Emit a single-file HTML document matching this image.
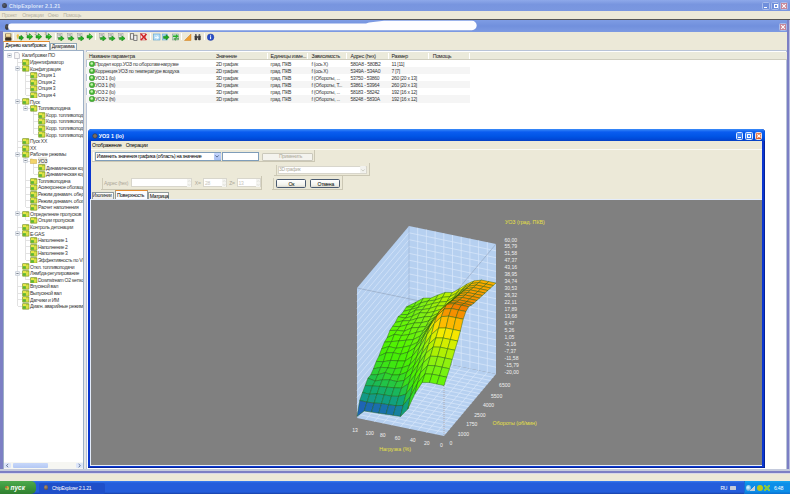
<!DOCTYPE html><html><head><meta charset="utf-8"><style>
html,body{margin:0;padding:0;width:790px;height:494px;overflow:hidden;background:#ECE9D8;position:relative;font-family:'Liberation Sans',sans-serif;}
.t{position:absolute;line-height:8px;white-space:nowrap;}
div{box-sizing:border-box;}
</style></head><body>
<div style="position:absolute;left:0px;top:0px;width:790px;height:11px;background:linear-gradient(#8EA9EA,#7895DF 40%,#7A97E0);"></div>
<div style="position:absolute;left:2.4px;top:2.8px;width:4.8px;height:5.4px;background:radial-gradient(circle at 40% 40%,#5A6070,#22262E);border-radius:50%;"></div>
<div class="t" style="left:9px;top:1.5px;font-size:5.25px;color:#DCE6FA;font-weight:bold;letter-spacing:0.12px;">ChipExplorer 2.1.21</div>
<div style="position:absolute;left:762px;top:2px;width:8px;height:8px;background:#6F8FDC;border:0.5px solid #A8BCEC;border-radius:1.5px;"></div>
<div style="position:absolute;left:771px;top:2px;width:8px;height:8px;background:#6F8FDC;border:0.5px solid #A8BCEC;border-radius:1.5px;"></div>
<div style="position:absolute;left:780px;top:2px;width:8px;height:8px;background:#C68496;border:0.5px solid #A8BCEC;border-radius:1.5px;"></div>
<div style="position:absolute;left:764px;top:6.5px;width:3px;height:1.2px;background:#fff"></div>
<div style="position:absolute;left:773.5px;top:3.8px;width:4px;height:4px;border:0.8px solid #fff;border-top-width:1.5px"></div>
<svg style="position:absolute;left:780px;top:2px" width="8" height="8"><path d="M2.2 2.2L5.8 5.8M5.8 2.2L2.2 5.8" stroke="#fff" stroke-width="1.1"/></svg>
<div style="position:absolute;left:0px;top:11px;width:790px;height:8px;background:#ECE9D8;"></div>
<div class="t" style="left:1.8px;top:10.9px;font-size:5.06px;letter-spacing:-0.285px;color:#B4B0A0;">Проект</div>
<div class="t" style="left:22.2px;top:10.9px;font-size:5.06px;letter-spacing:-0.285px;color:#B4B0A0;">Операции</div>
<div class="t" style="left:47.8px;top:10.9px;font-size:5.06px;letter-spacing:-0.285px;color:#B4B0A0;">Окно</div>
<div class="t" style="left:63.2px;top:10.9px;font-size:5.06px;letter-spacing:-0.285px;color:#B4B0A0;">Помощь</div>
<div style="position:absolute;left:0px;top:18.6px;width:790px;height:1px;background:#555;"></div>
<div style="position:absolute;left:0px;top:19.5px;width:790px;height:12px;background:linear-gradient(#7E9CE4,#7190DD 50%,#7D9AE2);"></div>
<div style="position:absolute;left:5px;top:23.6px;width:4.4px;height:6px;background:radial-gradient(circle at 40% 40%,#555,#222);border-radius:50%;"></div>
<svg style="position:absolute;left:0;top:17px" width="490" height="16" viewBox="0 0 490 16"><path d="M11.5 6.4H366L369 5.6L384 3.8H472A4.6 4.6 0 0 1 472 13.2H11.5A3.4 3.4 0 0 1 11.5 6.4Z" fill="#FDFDFF"/></svg>
<div style="position:absolute;left:778.5px;top:22.5px;width:8px;height:8px;background:#C68496;border:0.5px solid #A8BCEC;border-radius:1.5px;"></div>
<svg style="position:absolute;left:778.5px;top:22.5px" width="8" height="8"><path d="M2.2 2.2L5.8 5.8M5.8 2.2L2.2 5.8" stroke="#fff" stroke-width="1.1"/></svg>
<div style="position:absolute;left:0px;top:31px;width:2.5px;height:442px;background:#7C7FC4;"></div>
<div style="position:absolute;left:785px;top:50.3px;width:3.5px;height:421px;background:#C4CADC;"></div>
<div style="position:absolute;left:787.4px;top:19.5px;width:2.6px;height:453px;background:#7C7FC4;border-right:0.8px solid #B8BCE0;"></div>
<div style="position:absolute;left:2.5px;top:31.5px;width:784.5px;height:9px;background:#ECE9D8;"></div>
<div style="position:absolute;left:2.5px;top:40.5px;width:47.5px;height:10px;background:#FCFCFE;border:0.5px solid #91A7B4;border-bottom:none;border-top:1.5px solid #E68B2C;"></div>
<div class="t" style="left:5.3px;top:41.1px;font-size:5.06px;letter-spacing:-0.285px;color:#000;">Дерево калибровок</div>
<div style="position:absolute;left:50px;top:43px;width:26.5px;height:7px;background:linear-gradient(#FFFFFF,#ECEBE6);border:0.5px solid #91A7B4;border-bottom:none;"></div>
<div class="t" style="left:51.8px;top:42.6px;font-size:4.84px;letter-spacing:-0.273px;color:#222;">Диаграмма</div>
<div style="position:absolute;left:2.5px;top:50.3px;width:81px;height:420px;background:#fff;border:0.6px solid #9DB0C6;"></div>
<div style="position:absolute;left:83.5px;top:50.3px;width:2.5px;height:420px;background:#E6E6E6;"></div>
<div style="position:absolute;left:85.5px;top:50.3px;width:701.5px;height:420px;background:#fff;border:0.6px solid #B9C4D8;"></div>
<svg style="position:absolute;left:4.5px;top:32.5px" width="7" height="8" viewBox="0 0 7 8"><rect x="0.3" y="0.5" width="6" height="7" fill="#6A5838"/><rect x="1" y="0.8" width="4.6" height="3" fill="#F2D898"/><rect x="0.3" y="5" width="6" height="2.5" fill="#3A3020"/></svg>
<div style="position:absolute;left:13px;top:32.5px;width:0.8px;height:7.5px;background:#C8C4B0;border-right:0.5px solid #fff;"></div>
<div style="position:absolute;left:55px;top:32.5px;width:0.8px;height:7.5px;background:#C8C4B0;border-right:0.5px solid #fff;"></div>
<div style="position:absolute;left:95px;top:32.5px;width:0.8px;height:7.5px;background:#C8C4B0;border-right:0.5px solid #fff;"></div>
<div style="position:absolute;left:128px;top:32.5px;width:0.8px;height:7.5px;background:#C8C4B0;border-right:0.5px solid #fff;"></div>
<div style="position:absolute;left:150px;top:32.5px;width:0.8px;height:7.5px;background:#C8C4B0;border-right:0.5px solid #fff;"></div>
<div style="position:absolute;left:181px;top:32.5px;width:0.8px;height:7.5px;background:#C8C4B0;border-right:0.5px solid #fff;"></div>
<div style="position:absolute;left:204px;top:32.5px;width:0.8px;height:7.5px;background:#C8C4B0;border-right:0.5px solid #fff;"></div>
<svg style="position:absolute;left:16px;top:32.5px" width="8" height="8" viewBox="0 0 8 8"><path d="M0.5 2.5L2 0.8L3 2.5L1.5 6.5Z" fill="#F0C040"/><path d="M3 3.6L5 3.6L5 2.2L7.6 4.8L5 7.4L5 6L3 6Z" fill="#1FA81F" stroke="#0E6E0E" stroke-width="0.5"/></svg>
<div class="t" style="left:25.5px;top:30.3px;font-size:4.2px;color:#666">1</div>
<svg style="position:absolute;left:26px;top:33.0px" width="7" height="7" viewBox="0 0 7 7"><path d="M1 2.4H3.3V0.6L6.8 3.7L3.3 6.8V5H1Z" fill="#22B022" stroke="#137013" stroke-width="0.45" stroke-linejoin="round"/><path d="M1.6 3H3.8V1.8L5.2 3Z" fill="#9AF08A"/></svg>
<div class="t" style="left:34.5px;top:30.3px;font-size:4.2px;color:#666">2</div>
<svg style="position:absolute;left:35px;top:33.0px" width="7" height="7" viewBox="0 0 7 7"><path d="M1 2.4H3.3V0.6L6.8 3.7L3.3 6.8V5H1Z" fill="#22B022" stroke="#137013" stroke-width="0.45" stroke-linejoin="round"/><path d="M1.6 3H3.8V1.8L5.2 3Z" fill="#9AF08A"/></svg>
<div class="t" style="left:44.5px;top:30.3px;font-size:4.2px;color:#666">3</div>
<svg style="position:absolute;left:45px;top:33.0px" width="7" height="7" viewBox="0 0 7 7"><path d="M1 2.4H3.3V0.6L6.8 3.7L3.3 6.8V5H1Z" fill="#22B022" stroke="#137013" stroke-width="0.45" stroke-linejoin="round"/><path d="M1.6 3H3.8V1.8L5.2 3Z" fill="#9AF08A"/></svg>
<svg style="position:absolute;left:57px;top:32.5px" width="7.5" height="8" viewBox="0 0 7.5 8"><rect x="0.6" y="0.4" width="4.4" height="4.6" fill="#F2F2EE" stroke="#8A8A8A" stroke-width="0.45"/><path d="M1.3 1.6H4.2M1.3 2.7H3.6" stroke="#666" stroke-width="0.45"/><path d="M1.4 4.4H3.8V2.8L7.2 5.5L3.8 8V6.6H1.4Z" fill="#22B022" stroke="#137013" stroke-width="0.4" stroke-linejoin="round"/></svg>
<svg style="position:absolute;left:67px;top:32.5px" width="7.5" height="8" viewBox="0 0 7.5 8"><rect x="0.6" y="0.4" width="4.4" height="4.6" fill="#F2F2EE" stroke="#8A8A8A" stroke-width="0.45"/><path d="M1.3 1.6H4.2M1.3 2.7H3.6" stroke="#666" stroke-width="0.45"/><path d="M1.4 4.4H3.8V2.8L7.2 5.5L3.8 8V6.6H1.4Z" fill="#22B022" stroke="#137013" stroke-width="0.4" stroke-linejoin="round"/></svg>
<svg style="position:absolute;left:76.5px;top:32.5px" width="7.5" height="8" viewBox="0 0 7.5 8"><rect x="0.6" y="0.4" width="4.4" height="4.6" fill="#F2F2EE" stroke="#8A8A8A" stroke-width="0.45"/><path d="M1.3 1.6H4.2M1.3 2.7H3.6" stroke="#666" stroke-width="0.45"/><path d="M1.4 4.4H3.8V2.8L7.2 5.5L3.8 8V6.6H1.4Z" fill="#22B022" stroke="#137013" stroke-width="0.4" stroke-linejoin="round"/></svg>
<svg style="position:absolute;left:99px;top:32.5px" width="7.5" height="8" viewBox="0 0 7.5 8"><rect x="0.6" y="0.4" width="4.4" height="4.6" fill="#F2F2EE" stroke="#8A8A8A" stroke-width="0.45"/><path d="M1.3 1.6H4.2M1.3 2.7H3.6" stroke="#666" stroke-width="0.45"/><path d="M1.4 4.4H3.8V2.8L7.2 5.5L3.8 8V6.6H1.4Z" fill="#22B022" stroke="#137013" stroke-width="0.4" stroke-linejoin="round"/></svg>
<svg style="position:absolute;left:108px;top:32.5px" width="7.5" height="8" viewBox="0 0 7.5 8"><rect x="0.6" y="0.4" width="4.4" height="4.6" fill="#F2F2EE" stroke="#8A8A8A" stroke-width="0.45"/><path d="M1.3 1.6H4.2M1.3 2.7H3.6" stroke="#666" stroke-width="0.45"/><path d="M1.4 4.4H3.8V2.8L7.2 5.5L3.8 8V6.6H1.4Z" fill="#22B022" stroke="#137013" stroke-width="0.4" stroke-linejoin="round"/></svg>
<svg style="position:absolute;left:117.5px;top:32.5px" width="7.5" height="8" viewBox="0 0 7.5 8"><rect x="0.6" y="0.4" width="4.4" height="4.6" fill="#F2F2EE" stroke="#8A8A8A" stroke-width="0.45"/><path d="M1.3 1.6H4.2M1.3 2.7H3.6" stroke="#666" stroke-width="0.45"/><path d="M1.4 4.4H3.8V2.8L7.2 5.5L3.8 8V6.6H1.4Z" fill="#22B022" stroke="#137013" stroke-width="0.4" stroke-linejoin="round"/></svg>
<svg style="position:absolute;left:86px;top:33.0px" width="7" height="7" viewBox="0 0 7 7"><path d="M1 2.4H3.3V0.6L6.8 3.7L3.3 6.8V5H1Z" fill="#22B022" stroke="#137013" stroke-width="0.45" stroke-linejoin="round"/><path d="M1.6 3H3.8V1.8L5.2 3Z" fill="#9AF08A"/></svg>
<svg style="position:absolute;left:130px;top:32.5px" width="8" height="8" viewBox="0 0 8 8"><rect x="0.5" y="0.7" width="3.2" height="5.5" fill="#EEE" stroke="#555" stroke-width="0.7"/><rect x="3.8" y="2.2" width="3.2" height="5.3" fill="#EEE" stroke="#555" stroke-width="0.7"/></svg>
<svg style="position:absolute;left:139.5px;top:32.5px" width="8" height="8" viewBox="0 0 8 8"><rect x="0.5" y="0.5" width="5" height="6.5" fill="#F0E0E0" stroke="#C04040" stroke-width="0.5"/><path d="M1 1L6.5 7M6.5 1L1 7" stroke="#D02020" stroke-width="1.5"/></svg>
<svg style="position:absolute;left:152.5px;top:32.5px" width="8" height="8" viewBox="0 0 8 8"><rect x="0.5" y="1" width="6.5" height="6" fill="#B8E0F8" stroke="#5AA0D0" stroke-width="0.6"/><path d="M2 4.5L5 4.5M3.5 2.8L5.5 4.5L3.5 6" stroke="#fff" stroke-width="0.8" fill="none"/></svg>
<svg style="position:absolute;left:162px;top:32.5px" width="8" height="8" viewBox="0 0 8 8"><rect x="0.5" y="1" width="5" height="6" fill="#A8D8F0" stroke="#5AA0D0" stroke-width="0.5"/><path d="M1.5 3.2L4 3.2L4 1.6L7.2 4.3L4 7L4 5.4L1.5 5.4Z" fill="#1FA81F" stroke="#0E6E0E" stroke-width="0.4"/></svg>
<svg style="position:absolute;left:171.5px;top:32.5px" width="8" height="8" viewBox="0 0 8 8"><rect x="0.5" y="1" width="6" height="6" fill="#C8E0D0" stroke="#7A9A8A" stroke-width="0.5"/><path d="M1 2.5L4 2.5L4 1.2L6.8 3.2L4 5.2L4 4L1 4Z" fill="#28B028"/><path d="M7 5.2L4 5.2L4 4.2L1.2 6L4 7.8L4 6.6L7 6.6Z" fill="#50A050"/></svg>
<svg style="position:absolute;left:184px;top:32.5px" width="8" height="8" viewBox="0 0 8 8"><path d="M0.5 7.5L7 1L7 7.5Z" fill="#F0A030" stroke="#C07010" stroke-width="0.4"/></svg>
<svg style="position:absolute;left:193.5px;top:32.5px" width="8" height="8" viewBox="0 0 8 8"><rect x="0.6" y="2.5" width="2.6" height="4.8" rx="0.8" fill="#3A3A3A"/><rect x="4.1" y="2.5" width="2.6" height="4.8" rx="0.8" fill="#3A3A3A"/><rect x="2.6" y="3.2" width="2" height="1.8" fill="#555"/><rect x="1" y="1" width="1.6" height="2" fill="#666"/><rect x="4.6" y="1" width="1.6" height="2" fill="#666"/></svg>
<svg style="position:absolute;left:206.5px;top:32.5px" width="8" height="8" viewBox="0 0 8 8"><circle cx="3.6" cy="4.2" r="3.3" fill="#2A50C8" stroke="#1A3090" stroke-width="0.4"/><rect x="3.1" y="3.3" width="1" height="2.8" fill="#fff"/><circle cx="3.6" cy="2.3" r="0.55" fill="#fff"/></svg>
<div style="position:absolute;left:3px;top:51px;width:80px;height:411px;overflow:hidden">
<div style="position:absolute;left:14.2px;top:6.700000000000003px;width:0.7px;height:248.3px;background:#E2E2E2"></div>
<div style="position:absolute;left:22.2px;top:19.900000000000002px;width:0.7px;height:23.899999999999995px;background:#E2E2E2"></div>
<div style="position:absolute;left:22.2px;top:52.9px;width:0.7px;height:4.100000000000001px;background:#E2E2E2"></div>
<div style="position:absolute;left:30.2px;top:59.5px;width:0.7px;height:23.89999999999999px;background:#E2E2E2"></div>
<div style="position:absolute;left:22.2px;top:105.7px;width:0.7px;height:50.3px;background:#E2E2E2"></div>
<div style="position:absolute;left:30.2px;top:112.3px;width:0.7px;height:10.700000000000003px;background:#E2E2E2"></div>
<div style="position:absolute;left:22.2px;top:165.09999999999997px;width:0.7px;height:4.100000000000023px;background:#E2E2E2"></div>
<div style="position:absolute;left:22.2px;top:184.89999999999998px;width:0.7px;height:23.900000000000034px;background:#E2E2E2"></div>
<div style="position:absolute;left:22.2px;top:224.5px;width:0.7px;height:4.099999999999966px;background:#E2E2E2"></div>
<div style="position:absolute;left:14.5px;top:10.500000000000002px;width:4.0px;height:0.7px;background:#E2E2E2"></div>
<div style="position:absolute;left:14.5px;top:17.1px;width:4.0px;height:0.7px;background:#E2E2E2"></div>
<div style="position:absolute;left:22.5px;top:23.7px;width:4.0px;height:0.7px;background:#E2E2E2"></div>
<div style="position:absolute;left:22.5px;top:30.3px;width:4.0px;height:0.7px;background:#E2E2E2"></div>
<div style="position:absolute;left:22.5px;top:36.900000000000006px;width:4.0px;height:0.7px;background:#E2E2E2"></div>
<div style="position:absolute;left:22.5px;top:43.5px;width:4.0px;height:0.7px;background:#E2E2E2"></div>
<div style="position:absolute;left:14.5px;top:50.1px;width:4.0px;height:0.7px;background:#E2E2E2"></div>
<div style="position:absolute;left:22.5px;top:56.7px;width:4.0px;height:0.7px;background:#E2E2E2"></div>
<div style="position:absolute;left:30.5px;top:63.300000000000004px;width:4.0px;height:0.7px;background:#E2E2E2"></div>
<div style="position:absolute;left:30.5px;top:69.9px;width:4.0px;height:0.7px;background:#E2E2E2"></div>
<div style="position:absolute;left:30.5px;top:76.5px;width:4.0px;height:0.7px;background:#E2E2E2"></div>
<div style="position:absolute;left:30.5px;top:83.1px;width:4.0px;height:0.7px;background:#E2E2E2"></div>
<div style="position:absolute;left:14.5px;top:89.7px;width:4.0px;height:0.7px;background:#E2E2E2"></div>
<div style="position:absolute;left:14.5px;top:96.3px;width:4.0px;height:0.7px;background:#E2E2E2"></div>
<div style="position:absolute;left:14.5px;top:102.9px;width:4.0px;height:0.7px;background:#E2E2E2"></div>
<div style="position:absolute;left:22.5px;top:109.5px;width:4.0px;height:0.7px;background:#E2E2E2"></div>
<div style="position:absolute;left:30.5px;top:116.1px;width:4.0px;height:0.7px;background:#E2E2E2"></div>
<div style="position:absolute;left:30.5px;top:122.7px;width:4.0px;height:0.7px;background:#E2E2E2"></div>
<div style="position:absolute;left:22.5px;top:129.29999999999998px;width:4.0px;height:0.7px;background:#E2E2E2"></div>
<div style="position:absolute;left:22.5px;top:135.89999999999998px;width:4.0px;height:0.7px;background:#E2E2E2"></div>
<div style="position:absolute;left:22.5px;top:142.5px;width:4.0px;height:0.7px;background:#E2E2E2"></div>
<div style="position:absolute;left:22.5px;top:149.09999999999997px;width:4.0px;height:0.7px;background:#E2E2E2"></div>
<div style="position:absolute;left:22.5px;top:155.7px;width:4.0px;height:0.7px;background:#E2E2E2"></div>
<div style="position:absolute;left:14.5px;top:162.29999999999995px;width:4.0px;height:0.7px;background:#E2E2E2"></div>
<div style="position:absolute;left:22.5px;top:168.89999999999998px;width:4.0px;height:0.7px;background:#E2E2E2"></div>
<div style="position:absolute;left:14.5px;top:175.5px;width:4.0px;height:0.7px;background:#E2E2E2"></div>
<div style="position:absolute;left:14.5px;top:182.09999999999997px;width:4.0px;height:0.7px;background:#E2E2E2"></div>
<div style="position:absolute;left:22.5px;top:188.7px;width:4.0px;height:0.7px;background:#E2E2E2"></div>
<div style="position:absolute;left:22.5px;top:195.29999999999995px;width:4.0px;height:0.7px;background:#E2E2E2"></div>
<div style="position:absolute;left:22.5px;top:201.89999999999998px;width:4.0px;height:0.7px;background:#E2E2E2"></div>
<div style="position:absolute;left:22.5px;top:208.5px;width:4.0px;height:0.7px;background:#E2E2E2"></div>
<div style="position:absolute;left:14.5px;top:215.09999999999997px;width:4.0px;height:0.7px;background:#E2E2E2"></div>
<div style="position:absolute;left:14.5px;top:221.7px;width:4.0px;height:0.7px;background:#E2E2E2"></div>
<div style="position:absolute;left:22.5px;top:228.29999999999995px;width:4.0px;height:0.7px;background:#E2E2E2"></div>
<div style="position:absolute;left:14.5px;top:234.89999999999998px;width:4.0px;height:0.7px;background:#E2E2E2"></div>
<div style="position:absolute;left:14.5px;top:241.5px;width:4.0px;height:0.7px;background:#E2E2E2"></div>
<div style="position:absolute;left:14.5px;top:248.09999999999997px;width:4.0px;height:0.7px;background:#E2E2E2"></div>
<div style="position:absolute;left:14.5px;top:254.7px;width:4.0px;height:0.7px;background:#E2E2E2"></div>
<svg style="position:absolute;left:4.2px;top:1.7000000000000028px" width="5" height="5" viewBox="0 0 5 5"><rect x="0.4" y="0.4" width="4.2" height="4.2" rx="0.8" fill="#EEF0F4" stroke="#A8B4C4" stroke-width="0.5"/><path d="M1.4 2.5H3.6" stroke="#304050" stroke-width="0.6"/></svg>
<svg style="position:absolute;left:11px;top:0.7000000000000028px" width="6" height="7" viewBox="0 0 6 7"><path d="M0.6 0.5H4L5.4 1.8V6.5H0.6Z" fill="#F8F8F8" stroke="#9A9AA8" stroke-width="0.5"/></svg>
<div class="t" style="left:19px;top:0.400000000000003px;font-size:5.06px;letter-spacing:-0.285px;color:#383838;">Калибровки ПО</div>
<svg style="position:absolute;left:19px;top:7.8000000000000025px" width="7.5" height="6.5" viewBox="0 0 7.5 6.5"><rect x="0.4" y="0.5" width="6.6" height="5.8" rx="0.6" fill="#A8C030" stroke="#6A8420" stroke-width="0.45"/><rect x="1" y="1.1" width="3" height="2.1" fill="#E8E848"/><rect x="1" y="3.3" width="2.8" height="2.3" fill="#58B838"/><rect x="4.1" y="1.8" width="2.4" height="3.8" fill="#DCE048"/></svg>
<div class="t" style="left:27px;top:7.0000000000000036px;font-size:5.06px;letter-spacing:-0.285px;color:#383838;">Идентификатор</div>
<svg style="position:absolute;left:12.2px;top:14.900000000000002px" width="5" height="5" viewBox="0 0 5 5"><rect x="0.4" y="0.4" width="4.2" height="4.2" rx="0.8" fill="#EEF0F4" stroke="#A8B4C4" stroke-width="0.5"/><path d="M1.4 2.5H3.6" stroke="#304050" stroke-width="0.6"/></svg>
<svg style="position:absolute;left:19px;top:14.400000000000002px" width="7.5" height="6.5" viewBox="0 0 7.5 6.5"><rect x="0.4" y="0.5" width="6.6" height="5.8" rx="0.6" fill="#A8C030" stroke="#6A8420" stroke-width="0.45"/><rect x="1" y="1.1" width="3" height="2.1" fill="#E8E848"/><rect x="1" y="3.3" width="2.8" height="2.3" fill="#58B838"/><rect x="4.1" y="1.8" width="2.4" height="3.8" fill="#DCE048"/></svg>
<div class="t" style="left:27px;top:13.600000000000003px;font-size:5.06px;letter-spacing:-0.285px;color:#383838;">Конфигурация</div>
<svg style="position:absolute;left:27px;top:21.0px" width="7.5" height="6.5" viewBox="0 0 7.5 6.5"><rect x="0.4" y="0.5" width="6.6" height="5.8" rx="0.6" fill="#A8C030" stroke="#6A8420" stroke-width="0.45"/><rect x="1" y="1.1" width="3" height="2.1" fill="#E8E848"/><rect x="1" y="3.3" width="2.8" height="2.3" fill="#58B838"/><rect x="4.1" y="1.8" width="2.4" height="3.8" fill="#DCE048"/></svg>
<div class="t" style="left:35px;top:20.200000000000003px;font-size:5.06px;letter-spacing:-0.285px;color:#383838;">Опция 1</div>
<svg style="position:absolute;left:27px;top:27.6px" width="7.5" height="6.5" viewBox="0 0 7.5 6.5"><rect x="0.4" y="0.5" width="6.6" height="5.8" rx="0.6" fill="#A8C030" stroke="#6A8420" stroke-width="0.45"/><rect x="1" y="1.1" width="3" height="2.1" fill="#E8E848"/><rect x="1" y="3.3" width="2.8" height="2.3" fill="#58B838"/><rect x="4.1" y="1.8" width="2.4" height="3.8" fill="#DCE048"/></svg>
<div class="t" style="left:35px;top:26.800000000000004px;font-size:5.06px;letter-spacing:-0.285px;color:#383838;">Опция 2</div>
<svg style="position:absolute;left:27px;top:34.2px" width="7.5" height="6.5" viewBox="0 0 7.5 6.5"><rect x="0.4" y="0.5" width="6.6" height="5.8" rx="0.6" fill="#A8C030" stroke="#6A8420" stroke-width="0.45"/><rect x="1" y="1.1" width="3" height="2.1" fill="#E8E848"/><rect x="1" y="3.3" width="2.8" height="2.3" fill="#58B838"/><rect x="4.1" y="1.8" width="2.4" height="3.8" fill="#DCE048"/></svg>
<div class="t" style="left:35px;top:33.4px;font-size:5.06px;letter-spacing:-0.285px;color:#383838;">Опция 3</div>
<svg style="position:absolute;left:27px;top:40.8px" width="7.5" height="6.5" viewBox="0 0 7.5 6.5"><rect x="0.4" y="0.5" width="6.6" height="5.8" rx="0.6" fill="#A8C030" stroke="#6A8420" stroke-width="0.45"/><rect x="1" y="1.1" width="3" height="2.1" fill="#E8E848"/><rect x="1" y="3.3" width="2.8" height="2.3" fill="#58B838"/><rect x="4.1" y="1.8" width="2.4" height="3.8" fill="#DCE048"/></svg>
<div class="t" style="left:35px;top:39.99999999999999px;font-size:5.06px;letter-spacing:-0.285px;color:#383838;">Опция 4</div>
<svg style="position:absolute;left:12.2px;top:47.9px" width="5" height="5" viewBox="0 0 5 5"><rect x="0.4" y="0.4" width="4.2" height="4.2" rx="0.8" fill="#EEF0F4" stroke="#A8B4C4" stroke-width="0.5"/><path d="M1.4 2.5H3.6" stroke="#304050" stroke-width="0.6"/></svg>
<svg style="position:absolute;left:19px;top:47.4px" width="7.5" height="6.5" viewBox="0 0 7.5 6.5"><rect x="0.4" y="0.5" width="6.6" height="5.8" rx="0.6" fill="#A8C030" stroke="#6A8420" stroke-width="0.45"/><rect x="1" y="1.1" width="3" height="2.1" fill="#E8E848"/><rect x="1" y="3.3" width="2.8" height="2.3" fill="#58B838"/><rect x="4.1" y="1.8" width="2.4" height="3.8" fill="#DCE048"/></svg>
<div class="t" style="left:27px;top:46.599999999999994px;font-size:5.06px;letter-spacing:-0.285px;color:#383838;">Пуск</div>
<svg style="position:absolute;left:20.2px;top:54.5px" width="5" height="5" viewBox="0 0 5 5"><rect x="0.4" y="0.4" width="4.2" height="4.2" rx="0.8" fill="#EEF0F4" stroke="#A8B4C4" stroke-width="0.5"/><path d="M1.4 2.5H3.6" stroke="#304050" stroke-width="0.6"/></svg>
<svg style="position:absolute;left:27px;top:54.0px" width="7.5" height="6.5" viewBox="0 0 7.5 6.5"><rect x="0.4" y="0.5" width="6.6" height="5.8" rx="0.6" fill="#A8C030" stroke="#6A8420" stroke-width="0.45"/><rect x="1" y="1.1" width="3" height="2.1" fill="#E8E848"/><rect x="1" y="3.3" width="2.8" height="2.3" fill="#58B838"/><rect x="4.1" y="1.8" width="2.4" height="3.8" fill="#DCE048"/></svg>
<div class="t" style="left:35px;top:53.199999999999996px;font-size:5.06px;letter-spacing:-0.285px;color:#383838;">Топливоподача</div>
<svg style="position:absolute;left:35px;top:60.6px" width="7.5" height="6.5" viewBox="0 0 7.5 6.5"><rect x="0.4" y="0.5" width="6.6" height="5.8" rx="0.6" fill="#A8C030" stroke="#6A8420" stroke-width="0.45"/><rect x="1" y="1.1" width="3" height="2.1" fill="#E8E848"/><rect x="1" y="3.3" width="2.8" height="2.3" fill="#58B838"/><rect x="4.1" y="1.8" width="2.4" height="3.8" fill="#DCE048"/></svg>
<div class="t" style="left:43px;top:59.8px;font-size:5.06px;letter-spacing:-0.285px;color:#383838;">Корр. топливоподачи</div>
<svg style="position:absolute;left:35px;top:67.2px" width="7.5" height="6.5" viewBox="0 0 7.5 6.5"><rect x="0.4" y="0.5" width="6.6" height="5.8" rx="0.6" fill="#A8C030" stroke="#6A8420" stroke-width="0.45"/><rect x="1" y="1.1" width="3" height="2.1" fill="#E8E848"/><rect x="1" y="3.3" width="2.8" height="2.3" fill="#58B838"/><rect x="4.1" y="1.8" width="2.4" height="3.8" fill="#DCE048"/></svg>
<div class="t" style="left:43px;top:66.4px;font-size:5.06px;letter-spacing:-0.285px;color:#383838;">Корр. топливоподачи</div>
<svg style="position:absolute;left:35px;top:73.8px" width="7.5" height="6.5" viewBox="0 0 7.5 6.5"><rect x="0.4" y="0.5" width="6.6" height="5.8" rx="0.6" fill="#A8C030" stroke="#6A8420" stroke-width="0.45"/><rect x="1" y="1.1" width="3" height="2.1" fill="#E8E848"/><rect x="1" y="3.3" width="2.8" height="2.3" fill="#58B838"/><rect x="4.1" y="1.8" width="2.4" height="3.8" fill="#DCE048"/></svg>
<div class="t" style="left:43px;top:73.0px;font-size:5.06px;letter-spacing:-0.285px;color:#383838;">Корр. топливоподачи</div>
<svg style="position:absolute;left:35px;top:80.39999999999999px" width="7.5" height="6.5" viewBox="0 0 7.5 6.5"><rect x="0.4" y="0.5" width="6.6" height="5.8" rx="0.6" fill="#A8C030" stroke="#6A8420" stroke-width="0.45"/><rect x="1" y="1.1" width="3" height="2.1" fill="#E8E848"/><rect x="1" y="3.3" width="2.8" height="2.3" fill="#58B838"/><rect x="4.1" y="1.8" width="2.4" height="3.8" fill="#DCE048"/></svg>
<div class="t" style="left:43px;top:79.6px;font-size:5.06px;letter-spacing:-0.285px;color:#383838;">Корр. топливоподачи</div>
<svg style="position:absolute;left:19px;top:87.0px" width="7.5" height="6.5" viewBox="0 0 7.5 6.5"><rect x="0.4" y="0.5" width="6.6" height="5.8" rx="0.6" fill="#A8C030" stroke="#6A8420" stroke-width="0.45"/><rect x="1" y="1.1" width="3" height="2.1" fill="#E8E848"/><rect x="1" y="3.3" width="2.8" height="2.3" fill="#58B838"/><rect x="4.1" y="1.8" width="2.4" height="3.8" fill="#DCE048"/></svg>
<div class="t" style="left:27px;top:86.2px;font-size:5.06px;letter-spacing:-0.285px;color:#383838;">Пуск XX</div>
<svg style="position:absolute;left:19px;top:93.6px" width="7.5" height="6.5" viewBox="0 0 7.5 6.5"><rect x="0.4" y="0.5" width="6.6" height="5.8" rx="0.6" fill="#A8C030" stroke="#6A8420" stroke-width="0.45"/><rect x="1" y="1.1" width="3" height="2.1" fill="#E8E848"/><rect x="1" y="3.3" width="2.8" height="2.3" fill="#58B838"/><rect x="4.1" y="1.8" width="2.4" height="3.8" fill="#DCE048"/></svg>
<div class="t" style="left:27px;top:92.8px;font-size:5.06px;letter-spacing:-0.285px;color:#383838;">XX</div>
<svg style="position:absolute;left:12.2px;top:100.7px" width="5" height="5" viewBox="0 0 5 5"><rect x="0.4" y="0.4" width="4.2" height="4.2" rx="0.8" fill="#EEF0F4" stroke="#A8B4C4" stroke-width="0.5"/><path d="M1.4 2.5H3.6" stroke="#304050" stroke-width="0.6"/></svg>
<svg style="position:absolute;left:19px;top:100.2px" width="7.5" height="6.5" viewBox="0 0 7.5 6.5"><rect x="0.4" y="0.5" width="6.6" height="5.8" rx="0.6" fill="#A8C030" stroke="#6A8420" stroke-width="0.45"/><rect x="1" y="1.1" width="3" height="2.1" fill="#E8E848"/><rect x="1" y="3.3" width="2.8" height="2.3" fill="#58B838"/><rect x="4.1" y="1.8" width="2.4" height="3.8" fill="#DCE048"/></svg>
<div class="t" style="left:27px;top:99.4px;font-size:5.06px;letter-spacing:-0.285px;color:#383838;">Рабочие режимы</div>
<svg style="position:absolute;left:20.2px;top:107.3px" width="5" height="5" viewBox="0 0 5 5"><rect x="0.4" y="0.4" width="4.2" height="4.2" rx="0.8" fill="#EEF0F4" stroke="#A8B4C4" stroke-width="0.5"/><path d="M1.4 2.5H3.6" stroke="#304050" stroke-width="0.6"/></svg>
<svg style="position:absolute;left:27px;top:106.8px" width="7" height="6" viewBox="0 0 7 6"><path d="M0.3 1H2.5L3 1.6H6.6V5.6H0.3Z" fill="#F2D46A" stroke="#B89020" stroke-width="0.4"/></svg>
<div class="t" style="left:35px;top:106.0px;font-size:5.06px;letter-spacing:-0.285px;color:#383838;background:#ECEBE4;">УОЗ</div>
<svg style="position:absolute;left:35px;top:113.39999999999999px" width="7.5" height="6.5" viewBox="0 0 7.5 6.5"><rect x="0.4" y="0.5" width="6.6" height="5.8" rx="0.6" fill="#A8C030" stroke="#6A8420" stroke-width="0.45"/><rect x="1" y="1.1" width="3" height="2.1" fill="#E8E848"/><rect x="1" y="3.3" width="2.8" height="2.3" fill="#58B838"/><rect x="4.1" y="1.8" width="2.4" height="3.8" fill="#DCE048"/></svg>
<div class="t" style="left:43px;top:112.6px;font-size:5.06px;letter-spacing:-0.285px;color:#383838;">Динамическая коррекция</div>
<svg style="position:absolute;left:35px;top:120.0px" width="7.5" height="6.5" viewBox="0 0 7.5 6.5"><rect x="0.4" y="0.5" width="6.6" height="5.8" rx="0.6" fill="#A8C030" stroke="#6A8420" stroke-width="0.45"/><rect x="1" y="1.1" width="3" height="2.1" fill="#E8E848"/><rect x="1" y="3.3" width="2.8" height="2.3" fill="#58B838"/><rect x="4.1" y="1.8" width="2.4" height="3.8" fill="#DCE048"/></svg>
<div class="t" style="left:43px;top:119.2px;font-size:5.06px;letter-spacing:-0.285px;color:#383838;">Динамическая коррекция</div>
<svg style="position:absolute;left:27px;top:126.6px" width="7.5" height="6.5" viewBox="0 0 7.5 6.5"><rect x="0.4" y="0.5" width="6.6" height="5.8" rx="0.6" fill="#A8C030" stroke="#6A8420" stroke-width="0.45"/><rect x="1" y="1.1" width="3" height="2.1" fill="#E8E848"/><rect x="1" y="3.3" width="2.8" height="2.3" fill="#58B838"/><rect x="4.1" y="1.8" width="2.4" height="3.8" fill="#DCE048"/></svg>
<div class="t" style="left:35px;top:125.80000000000001px;font-size:5.06px;letter-spacing:-0.285px;color:#383838;">Топливоподача</div>
<svg style="position:absolute;left:27px;top:133.2px" width="7.5" height="6.5" viewBox="0 0 7.5 6.5"><rect x="0.4" y="0.5" width="6.6" height="5.8" rx="0.6" fill="#A8C030" stroke="#6A8420" stroke-width="0.45"/><rect x="1" y="1.1" width="3" height="2.1" fill="#E8E848"/><rect x="1" y="3.3" width="2.8" height="2.3" fill="#58B838"/><rect x="4.1" y="1.8" width="2.4" height="3.8" fill="#DCE048"/></svg>
<div class="t" style="left:35px;top:132.4px;font-size:5.06px;letter-spacing:-0.285px;color:#383838;">Асинхронное обогащение</div>
<svg style="position:absolute;left:27px;top:139.8px" width="7.5" height="6.5" viewBox="0 0 7.5 6.5"><rect x="0.4" y="0.5" width="6.6" height="5.8" rx="0.6" fill="#A8C030" stroke="#6A8420" stroke-width="0.45"/><rect x="1" y="1.1" width="3" height="2.1" fill="#E8E848"/><rect x="1" y="3.3" width="2.8" height="2.3" fill="#58B838"/><rect x="4.1" y="1.8" width="2.4" height="3.8" fill="#DCE048"/></svg>
<div class="t" style="left:35px;top:139.00000000000003px;font-size:5.06px;letter-spacing:-0.285px;color:#383838;">Режим динамич. обеднения</div>
<svg style="position:absolute;left:27px;top:146.39999999999998px" width="7.5" height="6.5" viewBox="0 0 7.5 6.5"><rect x="0.4" y="0.5" width="6.6" height="5.8" rx="0.6" fill="#A8C030" stroke="#6A8420" stroke-width="0.45"/><rect x="1" y="1.1" width="3" height="2.1" fill="#E8E848"/><rect x="1" y="3.3" width="2.8" height="2.3" fill="#58B838"/><rect x="4.1" y="1.8" width="2.4" height="3.8" fill="#DCE048"/></svg>
<div class="t" style="left:35px;top:145.6px;font-size:5.06px;letter-spacing:-0.285px;color:#383838;">Режим динамич. обогащения</div>
<svg style="position:absolute;left:27px;top:153.0px" width="7.5" height="6.5" viewBox="0 0 7.5 6.5"><rect x="0.4" y="0.5" width="6.6" height="5.8" rx="0.6" fill="#A8C030" stroke="#6A8420" stroke-width="0.45"/><rect x="1" y="1.1" width="3" height="2.1" fill="#E8E848"/><rect x="1" y="3.3" width="2.8" height="2.3" fill="#58B838"/><rect x="4.1" y="1.8" width="2.4" height="3.8" fill="#DCE048"/></svg>
<div class="t" style="left:35px;top:152.20000000000002px;font-size:5.06px;letter-spacing:-0.285px;color:#383838;">Расчет наполнения</div>
<svg style="position:absolute;left:12.2px;top:160.09999999999997px" width="5" height="5" viewBox="0 0 5 5"><rect x="0.4" y="0.4" width="4.2" height="4.2" rx="0.8" fill="#EEF0F4" stroke="#A8B4C4" stroke-width="0.5"/><path d="M1.4 2.5H3.6" stroke="#304050" stroke-width="0.6"/></svg>
<svg style="position:absolute;left:19px;top:159.59999999999997px" width="7.5" height="6.5" viewBox="0 0 7.5 6.5"><rect x="0.4" y="0.5" width="6.6" height="5.8" rx="0.6" fill="#A8C030" stroke="#6A8420" stroke-width="0.45"/><rect x="1" y="1.1" width="3" height="2.1" fill="#E8E848"/><rect x="1" y="3.3" width="2.8" height="2.3" fill="#58B838"/><rect x="4.1" y="1.8" width="2.4" height="3.8" fill="#DCE048"/></svg>
<div class="t" style="left:27px;top:158.79999999999998px;font-size:5.06px;letter-spacing:-0.285px;color:#383838;">Определение пропусков</div>
<svg style="position:absolute;left:27px;top:166.2px" width="7.5" height="6.5" viewBox="0 0 7.5 6.5"><rect x="0.4" y="0.5" width="6.6" height="5.8" rx="0.6" fill="#A8C030" stroke="#6A8420" stroke-width="0.45"/><rect x="1" y="1.1" width="3" height="2.1" fill="#E8E848"/><rect x="1" y="3.3" width="2.8" height="2.3" fill="#58B838"/><rect x="4.1" y="1.8" width="2.4" height="3.8" fill="#DCE048"/></svg>
<div class="t" style="left:35px;top:165.4px;font-size:5.06px;letter-spacing:-0.285px;color:#383838;">Опции пропусков</div>
<svg style="position:absolute;left:19px;top:172.8px" width="7.5" height="6.5" viewBox="0 0 7.5 6.5"><rect x="0.4" y="0.5" width="6.6" height="5.8" rx="0.6" fill="#A8C030" stroke="#6A8420" stroke-width="0.45"/><rect x="1" y="1.1" width="3" height="2.1" fill="#E8E848"/><rect x="1" y="3.3" width="2.8" height="2.3" fill="#58B838"/><rect x="4.1" y="1.8" width="2.4" height="3.8" fill="#DCE048"/></svg>
<div class="t" style="left:27px;top:172.00000000000003px;font-size:5.06px;letter-spacing:-0.285px;color:#383838;">Контроль детонации</div>
<svg style="position:absolute;left:12.2px;top:179.89999999999998px" width="5" height="5" viewBox="0 0 5 5"><rect x="0.4" y="0.4" width="4.2" height="4.2" rx="0.8" fill="#EEF0F4" stroke="#A8B4C4" stroke-width="0.5"/><path d="M1.4 2.5H3.6" stroke="#304050" stroke-width="0.6"/></svg>
<svg style="position:absolute;left:19px;top:179.39999999999998px" width="7.5" height="6.5" viewBox="0 0 7.5 6.5"><rect x="0.4" y="0.5" width="6.6" height="5.8" rx="0.6" fill="#A8C030" stroke="#6A8420" stroke-width="0.45"/><rect x="1" y="1.1" width="3" height="2.1" fill="#E8E848"/><rect x="1" y="3.3" width="2.8" height="2.3" fill="#58B838"/><rect x="4.1" y="1.8" width="2.4" height="3.8" fill="#DCE048"/></svg>
<div class="t" style="left:27px;top:178.6px;font-size:5.06px;letter-spacing:-0.285px;color:#383838;">E-GAS</div>
<svg style="position:absolute;left:27px;top:186.0px" width="7.5" height="6.5" viewBox="0 0 7.5 6.5"><rect x="0.4" y="0.5" width="6.6" height="5.8" rx="0.6" fill="#A8C030" stroke="#6A8420" stroke-width="0.45"/><rect x="1" y="1.1" width="3" height="2.1" fill="#E8E848"/><rect x="1" y="3.3" width="2.8" height="2.3" fill="#58B838"/><rect x="4.1" y="1.8" width="2.4" height="3.8" fill="#DCE048"/></svg>
<div class="t" style="left:35px;top:185.20000000000002px;font-size:5.06px;letter-spacing:-0.285px;color:#383838;">Наполнение 1</div>
<svg style="position:absolute;left:27px;top:192.59999999999997px" width="7.5" height="6.5" viewBox="0 0 7.5 6.5"><rect x="0.4" y="0.5" width="6.6" height="5.8" rx="0.6" fill="#A8C030" stroke="#6A8420" stroke-width="0.45"/><rect x="1" y="1.1" width="3" height="2.1" fill="#E8E848"/><rect x="1" y="3.3" width="2.8" height="2.3" fill="#58B838"/><rect x="4.1" y="1.8" width="2.4" height="3.8" fill="#DCE048"/></svg>
<div class="t" style="left:35px;top:191.79999999999998px;font-size:5.06px;letter-spacing:-0.285px;color:#383838;">Наполнение 2</div>
<svg style="position:absolute;left:27px;top:199.2px" width="7.5" height="6.5" viewBox="0 0 7.5 6.5"><rect x="0.4" y="0.5" width="6.6" height="5.8" rx="0.6" fill="#A8C030" stroke="#6A8420" stroke-width="0.45"/><rect x="1" y="1.1" width="3" height="2.1" fill="#E8E848"/><rect x="1" y="3.3" width="2.8" height="2.3" fill="#58B838"/><rect x="4.1" y="1.8" width="2.4" height="3.8" fill="#DCE048"/></svg>
<div class="t" style="left:35px;top:198.4px;font-size:5.06px;letter-spacing:-0.285px;color:#383838;">Наполнение 3</div>
<svg style="position:absolute;left:27px;top:205.8px" width="7.5" height="6.5" viewBox="0 0 7.5 6.5"><rect x="0.4" y="0.5" width="6.6" height="5.8" rx="0.6" fill="#A8C030" stroke="#6A8420" stroke-width="0.45"/><rect x="1" y="1.1" width="3" height="2.1" fill="#E8E848"/><rect x="1" y="3.3" width="2.8" height="2.3" fill="#58B838"/><rect x="4.1" y="1.8" width="2.4" height="3.8" fill="#DCE048"/></svg>
<div class="t" style="left:35px;top:205.00000000000003px;font-size:5.06px;letter-spacing:-0.285px;color:#383838;">Эффективность по VE</div>
<svg style="position:absolute;left:19px;top:212.39999999999998px" width="7.5" height="6.5" viewBox="0 0 7.5 6.5"><rect x="0.4" y="0.5" width="6.6" height="5.8" rx="0.6" fill="#A8C030" stroke="#6A8420" stroke-width="0.45"/><rect x="1" y="1.1" width="3" height="2.1" fill="#E8E848"/><rect x="1" y="3.3" width="2.8" height="2.3" fill="#58B838"/><rect x="4.1" y="1.8" width="2.4" height="3.8" fill="#DCE048"/></svg>
<div class="t" style="left:27px;top:211.6px;font-size:5.06px;letter-spacing:-0.285px;color:#383838;">Откл. топливоподачи</div>
<svg style="position:absolute;left:12.2px;top:219.5px" width="5" height="5" viewBox="0 0 5 5"><rect x="0.4" y="0.4" width="4.2" height="4.2" rx="0.8" fill="#EEF0F4" stroke="#A8B4C4" stroke-width="0.5"/><path d="M1.4 2.5H3.6" stroke="#304050" stroke-width="0.6"/></svg>
<svg style="position:absolute;left:19px;top:219.0px" width="7.5" height="6.5" viewBox="0 0 7.5 6.5"><rect x="0.4" y="0.5" width="6.6" height="5.8" rx="0.6" fill="#A8C030" stroke="#6A8420" stroke-width="0.45"/><rect x="1" y="1.1" width="3" height="2.1" fill="#E8E848"/><rect x="1" y="3.3" width="2.8" height="2.3" fill="#58B838"/><rect x="4.1" y="1.8" width="2.4" height="3.8" fill="#DCE048"/></svg>
<div class="t" style="left:27px;top:218.20000000000002px;font-size:5.06px;letter-spacing:-0.285px;color:#383838;">Лямбда-регулирование</div>
<svg style="position:absolute;left:27px;top:225.59999999999997px" width="7.5" height="6.5" viewBox="0 0 7.5 6.5"><rect x="0.4" y="0.5" width="6.6" height="5.8" rx="0.6" fill="#A8C030" stroke="#6A8420" stroke-width="0.45"/><rect x="1" y="1.1" width="3" height="2.1" fill="#E8E848"/><rect x="1" y="3.3" width="2.8" height="2.3" fill="#58B838"/><rect x="4.1" y="1.8" width="2.4" height="3.8" fill="#DCE048"/></svg>
<div class="t" style="left:35px;top:224.79999999999998px;font-size:5.06px;letter-spacing:-0.285px;color:#383838;">Downstream O2 sensor</div>
<svg style="position:absolute;left:19px;top:232.2px" width="7.5" height="6.5" viewBox="0 0 7.5 6.5"><rect x="0.4" y="0.5" width="6.6" height="5.8" rx="0.6" fill="#A8C030" stroke="#6A8420" stroke-width="0.45"/><rect x="1" y="1.1" width="3" height="2.1" fill="#E8E848"/><rect x="1" y="3.3" width="2.8" height="2.3" fill="#58B838"/><rect x="4.1" y="1.8" width="2.4" height="3.8" fill="#DCE048"/></svg>
<div class="t" style="left:27px;top:231.4px;font-size:5.06px;letter-spacing:-0.285px;color:#383838;">Впускной вал</div>
<svg style="position:absolute;left:19px;top:238.8px" width="7.5" height="6.5" viewBox="0 0 7.5 6.5"><rect x="0.4" y="0.5" width="6.6" height="5.8" rx="0.6" fill="#A8C030" stroke="#6A8420" stroke-width="0.45"/><rect x="1" y="1.1" width="3" height="2.1" fill="#E8E848"/><rect x="1" y="3.3" width="2.8" height="2.3" fill="#58B838"/><rect x="4.1" y="1.8" width="2.4" height="3.8" fill="#DCE048"/></svg>
<div class="t" style="left:27px;top:238.00000000000003px;font-size:5.06px;letter-spacing:-0.285px;color:#383838;">Выпускной вал</div>
<svg style="position:absolute;left:19px;top:245.39999999999998px" width="7.5" height="6.5" viewBox="0 0 7.5 6.5"><rect x="0.4" y="0.5" width="6.6" height="5.8" rx="0.6" fill="#A8C030" stroke="#6A8420" stroke-width="0.45"/><rect x="1" y="1.1" width="3" height="2.1" fill="#E8E848"/><rect x="1" y="3.3" width="2.8" height="2.3" fill="#58B838"/><rect x="4.1" y="1.8" width="2.4" height="3.8" fill="#DCE048"/></svg>
<div class="t" style="left:27px;top:244.6px;font-size:5.06px;letter-spacing:-0.285px;color:#383838;">Датчики и ИМ</div>
<svg style="position:absolute;left:19px;top:252.0px" width="7.5" height="6.5" viewBox="0 0 7.5 6.5"><rect x="0.4" y="0.5" width="6.6" height="5.8" rx="0.6" fill="#A8C030" stroke="#6A8420" stroke-width="0.45"/><rect x="1" y="1.1" width="3" height="2.1" fill="#E8E848"/><rect x="1" y="3.3" width="2.8" height="2.3" fill="#58B838"/><rect x="4.1" y="1.8" width="2.4" height="3.8" fill="#DCE048"/></svg>
<div class="t" style="left:27px;top:251.20000000000002px;font-size:5.06px;letter-spacing:-0.285px;color:#383838;">Диагн. аварийные режимы</div>
</div>
<div style="position:absolute;left:3.5px;top:462px;width:79px;height:6.5px;background:#F6F6F2;"></div>
<div style="position:absolute;left:13px;top:462.5px;width:35px;height:5.8px;background:linear-gradient(#C8D8FA,#B4C8F4);border-radius:1px;"></div>
<div style="position:absolute;left:4px;top:462.5px;width:6.5px;height:5.8px;background:#DDE6FA;border-radius:1px;"></div>
<div style="position:absolute;left:76px;top:462.5px;width:6.5px;height:5.8px;background:#DDE6FA;border-radius:1px;"></div>
<svg style="position:absolute;left:5px;top:463px" width="5" height="5"><path d="M3.2 1L1.4 2.6L3.2 4.2" stroke="#4D6185" stroke-width="0.8" fill="none"/></svg>
<svg style="position:absolute;left:77px;top:463px" width="5" height="5"><path d="M1.6 1L3.4 2.6L1.6 4.2" stroke="#4D6185" stroke-width="0.8" fill="none"/></svg>
<div style="position:absolute;left:86px;top:51.8px;width:700.5px;height:8px;background:#EBEADB;border-bottom:0.8px solid #D0CEBF;"></div>
<div style="position:absolute;left:267px;top:53px;width:0.8px;height:6px;background:#C7C5B2;border-right:0.5px solid #fff;"></div>
<div style="position:absolute;left:307.4px;top:53px;width:0.8px;height:6px;background:#C7C5B2;border-right:0.5px solid #fff;"></div>
<div style="position:absolute;left:346.3px;top:53px;width:0.8px;height:6px;background:#C7C5B2;border-right:0.5px solid #fff;"></div>
<div style="position:absolute;left:388px;top:53px;width:0.8px;height:6px;background:#C7C5B2;border-right:0.5px solid #fff;"></div>
<div style="position:absolute;left:428px;top:53px;width:0.8px;height:6px;background:#C7C5B2;border-right:0.5px solid #fff;"></div>
<div style="position:absolute;left:469px;top:53px;width:0.8px;height:6px;background:#C7C5B2;border-right:0.5px solid #fff;"></div>
<div class="t" style="left:89px;top:52.1px;font-size:5.28px;letter-spacing:-0.298px;color:#222;">Название параметра</div>
<div class="t" style="left:216px;top:52.1px;font-size:5.28px;letter-spacing:-0.298px;color:#222;">Значение</div>
<div class="t" style="left:270.6px;top:52.1px;font-size:5.28px;letter-spacing:-0.298px;color:#222;">Единицы изме...</div>
<div class="t" style="left:311.5px;top:52.1px;font-size:5.28px;letter-spacing:-0.298px;color:#222;">Зависимость</div>
<div class="t" style="left:350.5px;top:52.1px;font-size:5.28px;letter-spacing:-0.298px;color:#222;">Адрес (hex)</div>
<div class="t" style="left:391.5px;top:52.1px;font-size:5.28px;letter-spacing:-0.298px;color:#222;">Размер</div>
<div class="t" style="left:432.7px;top:52.1px;font-size:5.28px;letter-spacing:-0.298px;color:#222;">Помощь</div>
<svg style="position:absolute;left:88.5px;top:60.6px" width="6" height="6" viewBox="0 0 6 6"><circle cx="3" cy="3" r="2.8" fill="#48B838" stroke="#2A7A1E" stroke-width="0.45"/><circle cx="2.7" cy="2.5" r="1.3" fill="#C8F4B0"/></svg>
<div class="t" style="left:95px;top:59.7px;font-size:5.06px;letter-spacing:-0.285px;color:#383838;">Продел корр.УОЗ по оборотам-нагрузке</div>
<div class="t" style="left:216px;top:59.7px;font-size:5.06px;letter-spacing:-0.285px;color:#383838;">2D график</div>
<div class="t" style="left:270.6px;top:59.7px;font-size:5.06px;letter-spacing:-0.285px;color:#383838;">град. ПКВ</div>
<div class="t" style="left:311.5px;top:59.7px;font-size:5.06px;letter-spacing:-0.285px;color:#383838;">f (ось X)</div>
<div class="t" style="left:350.5px;top:59.7px;font-size:5.06px;letter-spacing:-0.285px;color:#383838;">580A8 - 580B2</div>
<div class="t" style="left:391.5px;top:59.7px;font-size:5.06px;letter-spacing:-0.285px;color:#383838;">11 [11]</div>
<div style="position:absolute;left:86px;top:67.17px;width:384px;height:7.07px;background:#F5F5F5;"></div>
<svg style="position:absolute;left:88.5px;top:67.67px" width="6" height="6" viewBox="0 0 6 6"><circle cx="3" cy="3" r="2.8" fill="#48B838" stroke="#2A7A1E" stroke-width="0.45"/><circle cx="2.7" cy="2.5" r="1.3" fill="#C8F4B0"/></svg>
<div class="t" style="left:95px;top:66.77000000000001px;font-size:5.06px;letter-spacing:-0.285px;color:#383838;">Коррекция УОЗ по температуре воздуха</div>
<div class="t" style="left:216px;top:66.77000000000001px;font-size:5.06px;letter-spacing:-0.285px;color:#383838;">2D график</div>
<div class="t" style="left:270.6px;top:66.77000000000001px;font-size:5.06px;letter-spacing:-0.285px;color:#383838;">град. ПКВ</div>
<div class="t" style="left:311.5px;top:66.77000000000001px;font-size:5.06px;letter-spacing:-0.285px;color:#383838;">f (ось X)</div>
<div class="t" style="left:350.5px;top:66.77000000000001px;font-size:5.06px;letter-spacing:-0.285px;color:#383838;">5349A - 534A0</div>
<div class="t" style="left:391.5px;top:66.77000000000001px;font-size:5.06px;letter-spacing:-0.285px;color:#383838;">7 [7]</div>
<svg style="position:absolute;left:88.5px;top:74.74000000000001px" width="6" height="6" viewBox="0 0 6 6"><circle cx="3" cy="3" r="2.8" fill="#48B838" stroke="#2A7A1E" stroke-width="0.45"/><circle cx="2.7" cy="2.5" r="1.3" fill="#C8F4B0"/></svg>
<div class="t" style="left:95px;top:73.84000000000002px;font-size:5.06px;letter-spacing:-0.285px;color:#383838;">УОЗ 1 (lo)</div>
<div class="t" style="left:216px;top:73.84000000000002px;font-size:5.06px;letter-spacing:-0.285px;color:#383838;">3D график</div>
<div class="t" style="left:270.6px;top:73.84000000000002px;font-size:5.06px;letter-spacing:-0.285px;color:#383838;">град. ПКВ</div>
<div class="t" style="left:311.5px;top:73.84000000000002px;font-size:5.06px;letter-spacing:-0.285px;color:#383838;">f (Обороты, ...</div>
<div class="t" style="left:350.5px;top:73.84000000000002px;font-size:5.06px;letter-spacing:-0.285px;color:#383838;">53750 - 53860</div>
<div class="t" style="left:391.5px;top:73.84000000000002px;font-size:5.06px;letter-spacing:-0.285px;color:#383838;">260 [20 x 13]</div>
<div style="position:absolute;left:86px;top:81.31px;width:384px;height:7.07px;background:#F5F5F5;"></div>
<svg style="position:absolute;left:88.5px;top:81.81px" width="6" height="6" viewBox="0 0 6 6"><circle cx="3" cy="3" r="2.8" fill="#48B838" stroke="#2A7A1E" stroke-width="0.45"/><circle cx="2.7" cy="2.5" r="1.3" fill="#C8F4B0"/></svg>
<div class="t" style="left:95px;top:80.91000000000001px;font-size:5.06px;letter-spacing:-0.285px;color:#383838;">УОЗ 1 (hi)</div>
<div class="t" style="left:216px;top:80.91000000000001px;font-size:5.06px;letter-spacing:-0.285px;color:#383838;">3D график</div>
<div class="t" style="left:270.6px;top:80.91000000000001px;font-size:5.06px;letter-spacing:-0.285px;color:#383838;">град. ПКВ</div>
<div class="t" style="left:311.5px;top:80.91000000000001px;font-size:5.06px;letter-spacing:-0.285px;color:#383838;">f (Обороты, Т...</div>
<div class="t" style="left:350.5px;top:80.91000000000001px;font-size:5.06px;letter-spacing:-0.285px;color:#383838;">53861 - 53964</div>
<div class="t" style="left:391.5px;top:80.91000000000001px;font-size:5.06px;letter-spacing:-0.285px;color:#383838;">260 [20 x 13]</div>
<svg style="position:absolute;left:88.5px;top:88.88px" width="6" height="6" viewBox="0 0 6 6"><circle cx="3" cy="3" r="2.8" fill="#48B838" stroke="#2A7A1E" stroke-width="0.45"/><circle cx="2.7" cy="2.5" r="1.3" fill="#C8F4B0"/></svg>
<div class="t" style="left:95px;top:87.98px;font-size:5.06px;letter-spacing:-0.285px;color:#383838;">УОЗ 2 (lo)</div>
<div class="t" style="left:216px;top:87.98px;font-size:5.06px;letter-spacing:-0.285px;color:#383838;">3D график</div>
<div class="t" style="left:270.6px;top:87.98px;font-size:5.06px;letter-spacing:-0.285px;color:#383838;">град. ПКВ</div>
<div class="t" style="left:311.5px;top:87.98px;font-size:5.06px;letter-spacing:-0.285px;color:#383838;">f (Обороты, ...</div>
<div class="t" style="left:350.5px;top:87.98px;font-size:5.06px;letter-spacing:-0.285px;color:#383838;">58183 - 58242</div>
<div class="t" style="left:391.5px;top:87.98px;font-size:5.06px;letter-spacing:-0.285px;color:#383838;">192 [16 x 12]</div>
<div style="position:absolute;left:86px;top:95.45px;width:384px;height:7.07px;background:#F5F5F5;"></div>
<svg style="position:absolute;left:88.5px;top:95.95px" width="6" height="6" viewBox="0 0 6 6"><circle cx="3" cy="3" r="2.8" fill="#48B838" stroke="#2A7A1E" stroke-width="0.45"/><circle cx="2.7" cy="2.5" r="1.3" fill="#C8F4B0"/></svg>
<div class="t" style="left:95px;top:95.05000000000001px;font-size:5.06px;letter-spacing:-0.285px;color:#383838;">УОЗ 2 (hi)</div>
<div class="t" style="left:216px;top:95.05000000000001px;font-size:5.06px;letter-spacing:-0.285px;color:#383838;">3D график</div>
<div class="t" style="left:270.6px;top:95.05000000000001px;font-size:5.06px;letter-spacing:-0.285px;color:#383838;">град. ПКВ</div>
<div class="t" style="left:311.5px;top:95.05000000000001px;font-size:5.06px;letter-spacing:-0.285px;color:#383838;">f (Обороты, ...</div>
<div class="t" style="left:350.5px;top:95.05000000000001px;font-size:5.06px;letter-spacing:-0.285px;color:#383838;">58248 - 5830A</div>
<div class="t" style="left:391.5px;top:95.05000000000001px;font-size:5.06px;letter-spacing:-0.285px;color:#383838;">192 [16 x 12]</div>
<div style="position:absolute;left:88.2px;top:128.8px;width:677.0999999999999px;height:338.8px;background:#0A36D0;border-radius:4px 4px 0 0;box-shadow:inset 0 -0.8px 0 #06208A,inset -0.8px 0 0 #06208A;"></div>
<div style="position:absolute;left:88.2px;top:128.8px;width:677.0999999999999px;height:12px;background:linear-gradient(#3C8CF8,#0A5CF0 25%,#0055E5 60%,#0048D8 85%,#0840C0);border-radius:4px 4px 0 0;"></div>
<svg style="position:absolute;left:91.5px;top:132.5px" width="6" height="6" viewBox="0 0 6 6"><circle cx="3" cy="3" r="2.3" fill="#7A6E62" stroke="#3A3430" stroke-width="0.6"/></svg>
<div class="t" style="left:98.7px;top:132.2px;font-size:5.4px;color:#fff;font-weight:bold;">УОЗ 1 (lo)</div>
<div style="position:absolute;left:735.7px;top:131.6px;width:7.8px;height:8px;background:linear-gradient(135deg,#5A9AFA,#2D6FEA);border:0.6px solid #E0ECFF;border-radius:1.5px;"></div>
<div style="position:absolute;left:738px;top:137px;width:3px;height:1.1px;background:#fff;"></div>
<div style="position:absolute;left:745.2px;top:131.6px;width:7.8px;height:8px;background:linear-gradient(135deg,#5A9AFA,#2D6FEA);border:0.6px solid #E0ECFF;border-radius:1.5px;"></div>
<div style="position:absolute;left:746.9px;top:133.8px;width:4.4px;height:3.8px;border:0.6px solid #fff;border-top-width:1.2px;"></div>
<div style="position:absolute;left:754.5px;top:131.6px;width:7.8px;height:8px;background:linear-gradient(135deg,#F08A60,#D5501E);border:0.6px solid #F0E0DA;border-radius:1.5px;"></div>
<svg style="position:absolute;left:754.5px;top:131.6px" width="8" height="8"><path d="M2.3 2.3L5.5 5.5M5.5 2.3L2.3 5.5" stroke="#fff" stroke-width="1.1"/></svg>
<div style="position:absolute;left:90.9px;top:140.7px;width:671.5px;height:324.3px;background:#ECE9D8;"></div>
<div class="t" style="left:92px;top:141.0px;font-size:5.17px;letter-spacing:-0.291px;color:#000;">Отображение</div>
<div class="t" style="left:125.8px;top:141.0px;font-size:5.17px;letter-spacing:-0.291px;color:#000;">Операции</div>
<div style="position:absolute;left:90.9px;top:149px;width:671.5px;height:0.7px;background:#FAFAF4;"></div>
<div style="position:absolute;left:91.5px;top:149.6px;width:223.2px;height:12.4px;background:#ECE9D8;border-bottom:0.7px solid #CBC7B4;border-right:0.7px solid #CBC7B4;"></div>
<div style="position:absolute;left:93.3px;top:151.5px;width:0.7px;height:9.5px;background:#C0BCA8;border-right:0.5px solid #fff;"></div>
<div style="position:absolute;left:95.3px;top:152.4px;width:126px;height:8.4px;background:#fff;border:0.6px solid #7F9DB9;"></div>
<div class="t" style="left:96.8px;top:152.8px;font-size:4.97px;letter-spacing:-0.280px;color:#000;">Изменить значения графика (область) на значение</div>
<div style="position:absolute;left:213.9px;top:152.9px;width:7px;height:7.4px;background:linear-gradient(#C6D6FC,#A8C0F4);border-radius:0.8px;"></div>
<svg style="position:absolute;left:214.4px;top:154px" width="6" height="5"><path d="M1.3 1.4L3 3.1L4.7 1.4" stroke="#4D6185" stroke-width="0.9" fill="none"/></svg>
<div style="position:absolute;left:222.2px;top:152.4px;width:37.2px;height:8.4px;background:#fff;border:0.6px solid #7F9DB9;"></div>
<div style="position:absolute;left:261.5px;top:152.6px;width:51px;height:8px;background:#F4F3EE;border:0.6px solid #CAC8BB;border-radius:1px;"></div>
<div class="t" style="left:279px;top:152.70000000000002px;font-size:4.95px;letter-spacing:-0.279px;color:#ACA899;">Применить</div>
<div style="position:absolute;left:274.4px;top:163.4px;width:95.8px;height:12.9px;background:#ECE9D8;border-bottom:0.7px solid #CBC7B4;border-right:0.7px solid #CBC7B4;"></div>
<div style="position:absolute;left:275.6px;top:165px;width:0.7px;height:10px;background:#D0CCB8;"></div>
<div style="position:absolute;left:277.5px;top:165.6px;width:89.5px;height:8.4px;background:#fff;border:0.6px solid #D8D6CC;"></div>
<div class="t" style="left:279px;top:165.70000000000002px;font-size:4.95px;letter-spacing:-0.279px;color:#ACA899;">3D график</div>
<div style="position:absolute;left:359.5px;top:166.3px;width:6.8px;height:7px;background:#F2F2EE;border-radius:0.8px;"></div>
<svg style="position:absolute;left:360px;top:167.6px" width="6" height="5"><path d="M1.3 1.4L3 3.1L4.7 1.4" stroke="#C8C8C0" stroke-width="0.9" fill="none"/></svg>
<div style="position:absolute;left:272px;top:176.4px;width:70.8px;height:13.6px;background:#ECE9D8;border-bottom:0.7px solid #CBC7B4;border-right:0.7px solid #CBC7B4;"></div>
<div style="position:absolute;left:273.2px;top:178px;width:0.7px;height:10.5px;background:#D0CCB8;"></div>
<div style="position:absolute;left:276px;top:179.3px;width:30.4px;height:8.4px;background:linear-gradient(#FFFFFF,#F2F2EC 70%,#DCDAD0);border:0.55px solid #4A5A70;border-radius:1.6px;"></div>
<div class="t" style="left:288.5px;top:179.5px;font-size:5.06px;letter-spacing:-0.285px;color:#000;">Ок</div>
<div style="position:absolute;left:310px;top:179.3px;width:30.2px;height:8.4px;background:linear-gradient(#FFFFFF,#F2F2EC 70%,#DCDAD0);border:0.55px solid #4A5A70;border-radius:1.6px;"></div>
<div class="t" style="left:317.5px;top:179.5px;font-size:5.06px;letter-spacing:-0.285px;color:#000;">Отмена</div>
<div style="position:absolute;left:100.7px;top:175.8px;width:161.6px;height:14.2px;background:#ECE9D8;border-bottom:0.7px solid #CBC7B4;border-right:0.7px solid #CBC7B4;"></div>
<div style="position:absolute;left:101.5px;top:177.5px;width:0.7px;height:11px;background:#D0CCB8;"></div>
<div class="t" style="left:104px;top:179.1px;font-size:5.06px;letter-spacing:-0.285px;color:#ACA899;">Адрес (hex)</div>
<div style="position:absolute;left:131.1px;top:178.3px;width:60.7px;height:9.1px;background:#fff;border:0.6px solid #D8D6CC;"></div>
<div style="position:absolute;left:186.8px;top:178.9px;width:4.4px;height:8px;background:#F4F4F0;"></div>
<svg style="position:absolute;left:186.8px;top:179.2px" width="5" height="8"><path d="M1.2 2.6L2.2 1.6L3.2 2.6M1.2 5.4L2.2 6.4L3.2 5.4" stroke="#C8C8C0" stroke-width="0.6" fill="none"/></svg>
<div style="position:absolute;left:203px;top:178.3px;width:24px;height:9.1px;background:#fff;border:0.6px solid #D8D6CC;"></div>
<div style="position:absolute;left:222px;top:178.9px;width:4.4px;height:8px;background:#F4F4F0;"></div>
<svg style="position:absolute;left:222px;top:179.2px" width="5" height="8"><path d="M1.2 2.6L2.2 1.6L3.2 2.6M1.2 5.4L2.2 6.4L3.2 5.4" stroke="#C8C8C0" stroke-width="0.6" fill="none"/></svg>
<div style="position:absolute;left:236.6px;top:178.3px;width:24px;height:9.1px;background:#fff;border:0.6px solid #D8D6CC;"></div>
<div style="position:absolute;left:255.60000000000002px;top:178.9px;width:4.4px;height:8px;background:#F4F4F0;"></div>
<svg style="position:absolute;left:255.60000000000002px;top:179.2px" width="5" height="8"><path d="M1.2 2.6L2.2 1.6L3.2 2.6M1.2 5.4L2.2 6.4L3.2 5.4" stroke="#C8C8C0" stroke-width="0.6" fill="none"/></svg>
<div class="t" style="left:194.8px;top:179.1px;font-size:5.06px;letter-spacing:-0.285px;color:#ACA899;">X=</div>
<div class="t" style="left:229.2px;top:179.1px;font-size:5.06px;letter-spacing:-0.285px;color:#ACA899;">Z=</div>
<div class="t" style="left:205px;top:179.1px;font-size:5.06px;letter-spacing:-0.285px;color:#C8C6BC;">28</div>
<div class="t" style="left:238.4px;top:179.1px;font-size:5.06px;letter-spacing:-0.285px;color:#C8C6BC;">13</div>
<div style="position:absolute;left:91.7px;top:192.4px;width:22.3px;height:6.8px;background:linear-gradient(#FFFFFF,#ECEBE6);border:0.5px solid #919B9C;border-bottom:none;"></div>
<div class="t" style="left:92.8px;top:191.70000000000002px;font-size:4.62px;letter-spacing:-0.260px;color:#222;">Изолинии</div>
<div style="position:absolute;left:148px;top:192.4px;width:21.2px;height:6.8px;background:linear-gradient(#FFFFFF,#ECEBE6);border:0.5px solid #919B9C;border-bottom:none;"></div>
<div class="t" style="left:149.8px;top:191.70000000000002px;font-size:5.06px;letter-spacing:-0.285px;color:#000;">Матрица</div>
<div style="position:absolute;left:114.5px;top:190px;width:33.5px;height:9.3px;background:#FCFCFE;border:0.5px solid #919B9C;border-bottom:none;border-top:1.5px solid #E68B2C;"></div>
<div class="t" style="left:117px;top:190.5px;font-size:5.06px;letter-spacing:-0.285px;color:#000;">Поверхность</div>
<div style="position:absolute;left:90.1px;top:199.0px;width:672.3px;height:266.6px;background:#E4ECFA;"></div>
<div style="position:absolute;left:91.3px;top:199.9px;width:670.6px;height:264.8px;background:#808080;"></div>
<svg style="position:absolute;left:0;top:0" width="790" height="494" viewBox="0 0 790 494">
<polygon points="357.0,288.0 409.0,226.0 409.0,356.0 357.0,418.0" fill="#B6D0F0"/>
<polygon points="409.0,226.0 496.0,244.0 496.0,374.0 409.0,356.0" fill="#B6D0F0"/>
<polygon points="357.0,418.0 444.0,436.0 496.0,374.0 409.0,356.0" fill="#B6D0F0"/>
<path d="M357.0,411.2L409.0,349.2L496.0,367.2M357.0,404.3L409.0,342.3L496.0,360.3M357.0,397.5L409.0,335.5L496.0,353.5M357.0,390.6L409.0,328.6L496.0,346.6M357.0,383.8L409.0,321.8L496.0,339.8M357.0,376.9L409.0,314.9L496.0,332.9M357.0,370.1L409.0,308.1L496.0,326.1M357.0,363.3L409.0,301.3L496.0,319.3M357.0,356.4L409.0,294.4L496.0,312.4M357.0,349.6L409.0,287.6L496.0,305.6M357.0,342.7L409.0,280.7L496.0,298.7M357.0,335.9L409.0,273.9L496.0,291.9M357.0,329.1L409.0,267.1L496.0,285.1M357.0,322.2L409.0,260.2L496.0,278.2M357.0,315.4L409.0,253.4L496.0,271.4M357.0,308.5L409.0,246.5L496.0,264.5M357.0,301.7L409.0,239.7L496.0,257.7M357.0,294.8L409.0,232.8L496.0,250.8M417.7,227.8L417.7,357.8L365.7,419.8M426.4,229.6L426.4,359.6L374.4,421.6M435.1,231.4L435.1,361.4L383.1,423.4M443.8,233.2L443.8,363.2L391.8,425.2M452.5,235.0L452.5,365.0L400.5,427.0M461.2,236.8L461.2,366.8L409.2,428.8M469.9,238.6L469.9,368.6L417.9,430.6M478.6,240.4L478.6,370.4L426.6,432.4M487.3,242.2L487.3,372.2L435.3,434.2M359.7,414.7L446.7,432.7M362.5,411.5L449.5,429.5M365.2,408.2L452.2,426.2M367.9,404.9L454.9,422.9M370.7,401.7L457.7,419.7M373.4,398.4L460.4,416.4M376.2,395.2L463.2,413.2M378.9,391.9L465.9,409.9M381.6,388.6L468.6,406.6M384.4,385.4L471.4,403.4M387.1,382.1L474.1,400.1M389.8,378.8L476.8,396.8M392.6,375.6L479.6,393.6M395.3,372.3L482.3,390.3M398.1,369.1L485.1,387.1M400.8,365.8L487.8,383.8M403.5,362.5L490.5,380.5M406.3,359.3L493.3,377.3" stroke="#DAE8FA" stroke-width="0.7" fill="none"/>
<path d="M409.0,226.0L409.0,356.0" stroke="#9AB0D0" stroke-width="0.6"/>
<path d="M357.0,288.0L444.0,306.0L496.0,244.0" stroke="#8898B0" stroke-width="0.5" fill="none"/>
<path d="M444.0,306.0L444.0,436.0" stroke="#A08070" stroke-width="0.5" stroke-dasharray="1 1" fill="none"/>
<polygon points="406.3,307.0 413.5,307.1 416.2,302.0 409.0,305.6" fill="#67f309" stroke="#1A5A08" stroke-width="0.42" stroke-linejoin="round"/>
<polygon points="413.5,307.1 420.8,302.9 423.5,298.0 416.2,302.0" fill="#75f110" stroke="#1A5A08" stroke-width="0.42" stroke-linejoin="round"/>
<polygon points="403.5,311.4 410.8,309.5 413.5,307.1 406.3,307.0" fill="#67f309" stroke="#1A5A08" stroke-width="0.42" stroke-linejoin="round"/>
<polygon points="420.8,302.9 428.0,301.0 430.8,298.1 423.5,298.0" fill="#84f012" stroke="#1A5A08" stroke-width="0.42" stroke-linejoin="round"/>
<polygon points="410.8,309.5 418.0,307.5 420.8,302.9 413.5,307.1" fill="#72f10e" stroke="#1A5A08" stroke-width="0.42" stroke-linejoin="round"/>
<polygon points="400.8,314.8 408.0,314.4 410.8,309.5 403.5,311.4" fill="#65f308" stroke="#1A5A08" stroke-width="0.42" stroke-linejoin="round"/>
<polygon points="428.0,301.0 435.3,300.1 438.0,295.0 430.8,298.1" fill="#93f00d" stroke="#1A5A08" stroke-width="0.42" stroke-linejoin="round"/>
<polygon points="418.0,307.5 425.3,305.6 428.0,301.0 420.8,302.9" fill="#7ef014" stroke="#1A5A08" stroke-width="0.42" stroke-linejoin="round"/>
<polygon points="408.0,314.4 415.3,310.3 418.0,307.5 410.8,309.5" fill="#70f20e" stroke="#1A5A08" stroke-width="0.42" stroke-linejoin="round"/>
<polygon points="398.1,316.7 405.3,318.2 408.0,314.4 400.8,314.8" fill="#64f308" stroke="#1A5A08" stroke-width="0.42" stroke-linejoin="round"/>
<polygon points="435.3,300.1 442.5,297.3 445.2,292.4 438.0,295.0" fill="#a8f006" stroke="#1A5A08" stroke-width="0.42" stroke-linejoin="round"/>
<polygon points="425.3,305.6 432.5,303.6 435.3,300.1 428.0,301.0" fill="#8ff00e" stroke="#1A5A08" stroke-width="0.42" stroke-linejoin="round"/>
<polygon points="415.3,310.3 422.5,309.6 425.3,305.6 418.0,307.5" fill="#7cf013" stroke="#1A5A08" stroke-width="0.42" stroke-linejoin="round"/>
<polygon points="405.3,318.2 412.6,316.1 415.3,310.3 408.0,314.4" fill="#6df20c" stroke="#1A5A08" stroke-width="0.42" stroke-linejoin="round"/>
<polygon points="395.3,322.5 402.6,320.9 405.3,318.2 398.1,316.7" fill="#64f307" stroke="#1A5A08" stroke-width="0.42" stroke-linejoin="round"/>
<polygon points="442.5,297.3 449.8,296.7 452.5,292.5 445.2,292.4" fill="#b7f001" stroke="#1A5A08" stroke-width="0.42" stroke-linejoin="round"/>
<polygon points="432.5,303.6 439.8,302.1 442.5,297.3 435.3,300.1" fill="#a0f008" stroke="#1A5A08" stroke-width="0.42" stroke-linejoin="round"/>
<polygon points="422.5,309.6 429.8,308.5 432.5,303.6 425.3,305.6" fill="#8af010" stroke="#1A5A08" stroke-width="0.42" stroke-linejoin="round"/>
<polygon points="412.6,316.1 419.8,312.7 422.5,309.6 415.3,310.3" fill="#79f012" stroke="#1A5A08" stroke-width="0.42" stroke-linejoin="round"/>
<polygon points="402.6,320.9 409.8,320.6 412.6,316.1 405.3,318.2" fill="#6af20b" stroke="#1A5A08" stroke-width="0.42" stroke-linejoin="round"/>
<polygon points="392.6,326.3 399.8,326.7 402.6,320.9 395.3,322.5" fill="#60f405" stroke="#1A5A08" stroke-width="0.42" stroke-linejoin="round"/>
<polygon points="449.8,296.7 457.0,292.8 459.8,288.5 452.5,292.5" fill="#cdee00" stroke="#1A5A08" stroke-width="0.42" stroke-linejoin="round"/>
<polygon points="439.8,302.1 447.0,301.4 449.8,296.7 442.5,297.3" fill="#b0f003" stroke="#1A5A08" stroke-width="0.42" stroke-linejoin="round"/>
<polygon points="429.8,308.5 437.0,306.0 439.8,302.1 432.5,303.6" fill="#9bf00a" stroke="#1A5A08" stroke-width="0.42" stroke-linejoin="round"/>
<polygon points="419.8,312.7 427.1,313.0 429.8,308.5 422.5,309.6" fill="#85f011" stroke="#1A5A08" stroke-width="0.42" stroke-linejoin="round"/>
<polygon points="409.8,320.6 417.1,318.4 419.8,312.7 412.6,316.1" fill="#75f110" stroke="#1A5A08" stroke-width="0.42" stroke-linejoin="round"/>
<polygon points="399.8,326.7 407.1,324.7 409.8,320.6 402.6,320.9" fill="#67f309" stroke="#1A5A08" stroke-width="0.42" stroke-linejoin="round"/>
<polygon points="389.8,330.5 397.1,330.3 399.8,326.7 392.6,326.3" fill="#5cf404" stroke="#1A5A08" stroke-width="0.42" stroke-linejoin="round"/>
<polygon points="447.0,301.4 454.3,296.8 457.0,292.8 449.8,296.7" fill="#c7ef00" stroke="#1A5A08" stroke-width="0.42" stroke-linejoin="round"/>
<polygon points="437.0,306.0 444.3,305.8 447.0,301.4 439.8,302.1" fill="#aaf005" stroke="#1A5A08" stroke-width="0.42" stroke-linejoin="round"/>
<polygon points="427.1,313.0 434.3,311.4 437.0,306.0 429.8,308.5" fill="#94f00c" stroke="#1A5A08" stroke-width="0.42" stroke-linejoin="round"/>
<polygon points="457.0,292.8 464.3,287.5 467.0,284.0 459.8,288.5" fill="#f2eb00" stroke="#1A5A08" stroke-width="0.42" stroke-linejoin="round"/>
<polygon points="417.1,318.4 424.3,316.9 427.1,313.0 419.8,312.7" fill="#80f013" stroke="#1A5A08" stroke-width="0.42" stroke-linejoin="round"/>
<polygon points="407.1,324.7 414.3,323.0 417.1,318.4 409.8,320.6" fill="#70f20e" stroke="#1A5A08" stroke-width="0.42" stroke-linejoin="round"/>
<polygon points="397.1,330.3 404.3,331.2 407.1,324.7 399.8,326.7" fill="#62f306" stroke="#1A5A08" stroke-width="0.42" stroke-linejoin="round"/>
<polygon points="387.1,337.7 394.4,334.4 397.1,330.3 389.8,330.5" fill="#58f501" stroke="#1A5A08" stroke-width="0.42" stroke-linejoin="round"/>
<polygon points="444.3,305.8 451.5,300.9 454.3,296.8 447.0,301.4" fill="#c0ef00" stroke="#1A5A08" stroke-width="0.42" stroke-linejoin="round"/>
<polygon points="434.3,311.4 441.6,309.1 444.3,305.8 437.0,306.0" fill="#a4f007" stroke="#1A5A08" stroke-width="0.42" stroke-linejoin="round"/>
<polygon points="424.3,316.9 431.6,316.4 434.3,311.4 427.1,313.0" fill="#8cf00f" stroke="#1A5A08" stroke-width="0.42" stroke-linejoin="round"/>
<polygon points="454.3,296.8 461.5,290.9 464.3,287.5 457.0,292.8" fill="#eeec00" stroke="#1A5A08" stroke-width="0.42" stroke-linejoin="round"/>
<polygon points="414.3,323.0 421.6,322.7 424.3,316.9 417.1,318.4" fill="#79f012" stroke="#1A5A08" stroke-width="0.42" stroke-linejoin="round"/>
<polygon points="464.3,287.5 471.5,283.5 474.2,280.8 467.0,284.0" fill="#fdcb00" stroke="#1A5A08" stroke-width="0.42" stroke-linejoin="round"/>
<polygon points="404.3,331.2 411.6,327.9 414.3,323.0 407.1,324.7" fill="#6bf20b" stroke="#1A5A08" stroke-width="0.42" stroke-linejoin="round"/>
<polygon points="394.4,334.4 401.6,335.5 404.3,331.2 397.1,330.3" fill="#5df404" stroke="#1A5A08" stroke-width="0.42" stroke-linejoin="round"/>
<polygon points="384.4,342.2 391.6,341.6 394.4,334.4 387.1,337.7" fill="#52f302" stroke="#1A5A08" stroke-width="0.42" stroke-linejoin="round"/>
<polygon points="431.6,316.4 438.8,312.8 441.6,309.1 434.3,311.4" fill="#9ff009" stroke="#1A5A08" stroke-width="0.42" stroke-linejoin="round"/>
<polygon points="421.6,322.7 428.8,320.9 431.6,316.4 424.3,316.9" fill="#84f012" stroke="#1A5A08" stroke-width="0.42" stroke-linejoin="round"/>
<polygon points="441.6,309.1 448.8,303.7 451.5,300.9 444.3,305.8" fill="#bef000" stroke="#1A5A08" stroke-width="0.42" stroke-linejoin="round"/>
<polygon points="411.6,327.9 418.8,327.4 421.6,322.7 414.3,323.0" fill="#74f110" stroke="#1A5A08" stroke-width="0.42" stroke-linejoin="round"/>
<polygon points="401.6,335.5 408.9,334.7 411.6,327.9 404.3,331.2" fill="#64f307" stroke="#1A5A08" stroke-width="0.42" stroke-linejoin="round"/>
<polygon points="471.5,283.5 478.8,282.6 481.5,280.1 474.2,280.8" fill="#fdb400" stroke="#1A5A08" stroke-width="0.42" stroke-linejoin="round"/>
<polygon points="451.5,300.9 458.8,294.2 461.5,290.9 454.3,296.8" fill="#ecec00" stroke="#1A5A08" stroke-width="0.42" stroke-linejoin="round"/>
<polygon points="391.6,341.6 398.9,340.9 401.6,335.5 394.4,334.4" fill="#57f501" stroke="#1A5A08" stroke-width="0.42" stroke-linejoin="round"/>
<polygon points="381.6,348.8 388.9,346.5 391.6,341.6 384.4,342.2" fill="#4df104" stroke="#1A5A08" stroke-width="0.42" stroke-linejoin="round"/>
<polygon points="461.5,290.9 468.8,286.3 471.5,283.5 464.3,287.5" fill="#fdca00" stroke="#1A5A08" stroke-width="0.42" stroke-linejoin="round"/>
<polygon points="478.8,282.6 486.0,284.0 488.8,281.5 481.5,280.1" fill="#fbad00" stroke="#1A5A08" stroke-width="0.42" stroke-linejoin="round"/>
<polygon points="418.8,327.4 426.1,326.3 428.8,320.9 421.6,322.7" fill="#7cf013" stroke="#1A5A08" stroke-width="0.42" stroke-linejoin="round"/>
<polygon points="428.8,320.9 436.1,316.1 438.8,312.8 431.6,316.4" fill="#9af00a" stroke="#1A5A08" stroke-width="0.42" stroke-linejoin="round"/>
<polygon points="398.9,340.9 406.1,340.2 408.9,334.7 401.6,335.5" fill="#5df404" stroke="#1A5A08" stroke-width="0.42" stroke-linejoin="round"/>
<polygon points="408.9,334.7 416.1,332.5 418.8,327.4 411.6,327.9" fill="#6ef20c" stroke="#1A5A08" stroke-width="0.42" stroke-linejoin="round"/>
<polygon points="388.9,346.5 396.1,348.3 398.9,340.9 391.6,341.6" fill="#51f302" stroke="#1A5A08" stroke-width="0.42" stroke-linejoin="round"/>
<polygon points="378.9,356.1 386.1,352.9 388.9,346.5 381.6,348.8" fill="#46ee07" stroke="#1A5A08" stroke-width="0.42" stroke-linejoin="round"/>
<polygon points="438.8,312.8 446.1,306.1 448.8,303.7 441.6,309.1" fill="#bfef00" stroke="#1A5A08" stroke-width="0.42" stroke-linejoin="round"/>
<polygon points="486.0,284.0 493.3,285.5 496.0,283.0 488.8,281.5" fill="#fbad00" stroke="#1A5A08" stroke-width="0.42" stroke-linejoin="round"/>
<polygon points="448.8,303.7 456.1,296.6 458.8,294.2 451.5,300.9" fill="#ecec00" stroke="#1A5A08" stroke-width="0.42" stroke-linejoin="round"/>
<polygon points="468.8,286.3 476.0,285.0 478.8,282.6 471.5,283.5" fill="#fcb000" stroke="#1A5A08" stroke-width="0.42" stroke-linejoin="round"/>
<polygon points="458.8,294.2 466.0,288.9 468.8,286.3 461.5,290.9" fill="#fec800" stroke="#1A5A08" stroke-width="0.42" stroke-linejoin="round"/>
<polygon points="396.1,348.3 403.4,347.1 406.1,340.2 398.9,340.9" fill="#54f500" stroke="#1A5A08" stroke-width="0.42" stroke-linejoin="round"/>
<polygon points="406.1,340.2 413.4,339.5 416.1,332.5 408.9,334.7" fill="#65f308" stroke="#1A5A08" stroke-width="0.42" stroke-linejoin="round"/>
<polygon points="376.2,361.4 383.4,361.7 386.1,352.9 378.9,356.1" fill="#3ee80f" stroke="#1A5A08" stroke-width="0.42" stroke-linejoin="round"/>
<polygon points="416.1,332.5 423.4,330.6 426.1,326.3 418.8,327.4" fill="#77f111" stroke="#1A5A08" stroke-width="0.42" stroke-linejoin="round"/>
<polygon points="386.1,352.9 393.4,352.6 396.1,348.3 388.9,346.5" fill="#4bf005" stroke="#1A5A08" stroke-width="0.42" stroke-linejoin="round"/>
<polygon points="426.1,326.3 433.3,319.6 436.1,316.1 428.8,320.9" fill="#95f00c" stroke="#1A5A08" stroke-width="0.42" stroke-linejoin="round"/>
<polygon points="476.0,285.0 483.3,286.5 486.0,284.0 478.8,282.6" fill="#fba800" stroke="#1A5A08" stroke-width="0.42" stroke-linejoin="round"/>
<polygon points="436.1,316.1 443.3,308.9 446.1,306.1 438.8,312.8" fill="#c0ef00" stroke="#1A5A08" stroke-width="0.42" stroke-linejoin="round"/>
<polygon points="393.4,352.6 400.6,354.3 403.4,347.1 396.1,348.3" fill="#4df104" stroke="#1A5A08" stroke-width="0.42" stroke-linejoin="round"/>
<polygon points="373.4,368.9 380.7,367.3 383.4,361.7 376.2,361.4" fill="#36dd20" stroke="#1A5A08" stroke-width="0.42" stroke-linejoin="round"/>
<polygon points="483.3,286.5 490.5,288.0 493.3,285.5 486.0,284.0" fill="#faa800" stroke="#1A5A08" stroke-width="0.42" stroke-linejoin="round"/>
<polygon points="446.1,306.1 453.3,298.8 456.1,296.6 448.8,303.7" fill="#f1eb00" stroke="#1A5A08" stroke-width="0.42" stroke-linejoin="round"/>
<polygon points="403.4,347.1 410.6,345.6 413.4,339.5 406.1,340.2" fill="#5bf403" stroke="#1A5A08" stroke-width="0.42" stroke-linejoin="round"/>
<polygon points="466.0,288.9 473.3,287.5 476.0,285.0 468.8,286.3" fill="#fbac00" stroke="#1A5A08" stroke-width="0.42" stroke-linejoin="round"/>
<polygon points="383.4,361.7 390.7,360.4 393.4,352.6 386.1,352.9" fill="#44ed08" stroke="#1A5A08" stroke-width="0.42" stroke-linejoin="round"/>
<polygon points="413.4,339.5 420.6,335.8 423.4,330.6 416.1,332.5" fill="#70f20d" stroke="#1A5A08" stroke-width="0.42" stroke-linejoin="round"/>
<polygon points="456.1,296.6 463.3,291.3 466.0,288.9 458.8,294.2" fill="#ffc500" stroke="#1A5A08" stroke-width="0.42" stroke-linejoin="round"/>
<polygon points="423.4,330.6 430.6,323.8 433.3,319.6 426.1,326.3" fill="#90f00e" stroke="#1A5A08" stroke-width="0.42" stroke-linejoin="round"/>
<polygon points="473.3,287.5 480.5,289.0 483.3,286.5 476.0,285.0" fill="#faa300" stroke="#1A5A08" stroke-width="0.42" stroke-linejoin="round"/>
<polygon points="380.7,367.3 387.9,367.9 390.7,360.4 383.4,361.7" fill="#3be316" stroke="#1A5A08" stroke-width="0.42" stroke-linejoin="round"/>
<polygon points="370.7,374.8 377.9,374.7 380.7,367.3 373.4,368.9" fill="#2ccf34" stroke="#1A5A08" stroke-width="0.42" stroke-linejoin="round"/>
<polygon points="390.7,360.4 397.9,360.9 400.6,354.3 393.4,352.6" fill="#47ee07" stroke="#1A5A08" stroke-width="0.42" stroke-linejoin="round"/>
<polygon points="400.6,354.3 407.9,352.2 410.6,345.6 403.4,347.1" fill="#52f401" stroke="#1A5A08" stroke-width="0.42" stroke-linejoin="round"/>
<polygon points="433.3,319.6 440.6,311.6 443.3,308.9 436.1,316.1" fill="#c2ef00" stroke="#1A5A08" stroke-width="0.42" stroke-linejoin="round"/>
<polygon points="410.6,345.6 417.9,342.2 420.6,335.8 413.4,339.5" fill="#67f309" stroke="#1A5A08" stroke-width="0.42" stroke-linejoin="round"/>
<polygon points="480.5,289.0 487.8,290.5 490.5,288.0 483.3,286.5" fill="#faa300" stroke="#1A5A08" stroke-width="0.42" stroke-linejoin="round"/>
<polygon points="443.3,308.9 450.6,301.2 453.3,298.8 446.1,306.1" fill="#f5ea00" stroke="#1A5A08" stroke-width="0.42" stroke-linejoin="round"/>
<polygon points="463.3,291.3 470.6,290.0 473.3,287.5 466.0,288.9" fill="#faa700" stroke="#1A5A08" stroke-width="0.42" stroke-linejoin="round"/>
<polygon points="387.9,367.9 395.2,368.6 397.9,360.9 390.7,360.4" fill="#3ee710" stroke="#1A5A08" stroke-width="0.42" stroke-linejoin="round"/>
<polygon points="453.3,298.8 460.6,293.6 463.3,291.3 456.1,296.6" fill="#febf00" stroke="#1A5A08" stroke-width="0.42" stroke-linejoin="round"/>
<polygon points="397.9,360.9 405.2,361.0 407.9,352.2 400.6,354.3" fill="#4aef06" stroke="#1A5A08" stroke-width="0.42" stroke-linejoin="round"/>
<polygon points="420.6,335.8 427.9,327.9 430.6,323.8 423.4,330.6" fill="#89f010" stroke="#1A5A08" stroke-width="0.42" stroke-linejoin="round"/>
<polygon points="377.9,374.7 385.2,372.6 387.9,367.9 380.7,367.3" fill="#34d924" stroke="#1A5A08" stroke-width="0.42" stroke-linejoin="round"/>
<polygon points="367.9,378.2 375.2,381.0 377.9,374.7 370.7,374.8" fill="#22c349" stroke="#1A5A08" stroke-width="0.42" stroke-linejoin="round"/>
<polygon points="407.9,352.2 415.1,347.7 417.9,342.2 410.6,345.6" fill="#5ef405" stroke="#1A5A08" stroke-width="0.42" stroke-linejoin="round"/>
<polygon points="470.6,290.0 477.8,291.5 480.5,289.0 473.3,287.5" fill="#f89f00" stroke="#1A5A08" stroke-width="0.42" stroke-linejoin="round"/>
<polygon points="430.6,323.8 437.9,314.6 440.6,311.6 433.3,319.6" fill="#c1ef00" stroke="#1A5A08" stroke-width="0.42" stroke-linejoin="round"/>
<polygon points="395.2,368.6 402.4,367.7 405.2,361.0 397.9,360.9" fill="#41eb0a" stroke="#1A5A08" stroke-width="0.42" stroke-linejoin="round"/>
<polygon points="385.2,372.6 392.4,375.0 395.2,368.6 387.9,367.9" fill="#36dd1f" stroke="#1A5A08" stroke-width="0.42" stroke-linejoin="round"/>
<polygon points="375.2,381.0 382.4,379.8 385.2,372.6 377.9,374.7" fill="#28cb3b" stroke="#1A5A08" stroke-width="0.42" stroke-linejoin="round"/>
<polygon points="417.9,342.2 425.1,332.8 427.9,327.9 420.6,335.8" fill="#80f013" stroke="#1A5A08" stroke-width="0.42" stroke-linejoin="round"/>
<polygon points="405.2,361.0 412.4,356.2 415.1,347.7 407.9,352.2" fill="#53f401" stroke="#1A5A08" stroke-width="0.42" stroke-linejoin="round"/>
<polygon points="477.8,291.5 485.1,293.0 487.8,290.5 480.5,289.0" fill="#f89f00" stroke="#1A5A08" stroke-width="0.42" stroke-linejoin="round"/>
<polygon points="440.6,311.6 447.8,303.7 450.6,301.2 443.3,308.9" fill="#f6e600" stroke="#1A5A08" stroke-width="0.42" stroke-linejoin="round"/>
<polygon points="365.2,385.5 372.5,386.0 375.2,381.0 367.9,378.2" fill="#1ab75b" stroke="#1A5A08" stroke-width="0.42" stroke-linejoin="round"/>
<polygon points="460.6,293.6 467.8,292.5 470.6,290.0 463.3,291.3" fill="#f9a200" stroke="#1A5A08" stroke-width="0.42" stroke-linejoin="round"/>
<polygon points="450.6,301.2 457.8,295.9 460.6,293.6 453.3,298.8" fill="#fdb900" stroke="#1A5A08" stroke-width="0.42" stroke-linejoin="round"/>
<polygon points="392.4,375.0 399.7,374.9 402.4,367.7 395.2,368.6" fill="#39e01b" stroke="#1A5A08" stroke-width="0.42" stroke-linejoin="round"/>
<polygon points="382.4,379.8 389.7,379.8 392.4,375.0 385.2,372.6" fill="#30d42d" stroke="#1A5A08" stroke-width="0.42" stroke-linejoin="round"/>
<polygon points="402.4,367.7 409.7,365.0 412.4,356.2 405.2,361.0" fill="#49ef06" stroke="#1A5A08" stroke-width="0.42" stroke-linejoin="round"/>
<polygon points="372.5,386.0 379.7,386.5 382.4,379.8 375.2,381.0" fill="#1cbb54" stroke="#1A5A08" stroke-width="0.42" stroke-linejoin="round"/>
<polygon points="427.9,327.9 435.1,318.0 437.9,314.6 430.6,323.8" fill="#bff000" stroke="#1A5A08" stroke-width="0.42" stroke-linejoin="round"/>
<polygon points="467.8,292.5 475.1,294.0 477.8,291.5 470.6,290.0" fill="#f79a00" stroke="#1A5A08" stroke-width="0.42" stroke-linejoin="round"/>
<polygon points="362.5,392.5 369.7,394.3 372.5,386.0 365.2,385.5" fill="#0fa578" stroke="#1A5A08" stroke-width="0.42" stroke-linejoin="round"/>
<polygon points="415.1,347.7 422.4,338.9 425.1,332.8 417.9,342.2" fill="#77f111" stroke="#1A5A08" stroke-width="0.42" stroke-linejoin="round"/>
<polygon points="389.7,379.8 396.9,381.6 399.7,374.9 392.4,375.0" fill="#31d629" stroke="#1A5A08" stroke-width="0.42" stroke-linejoin="round"/>
<polygon points="437.9,314.6 445.1,306.3 447.8,303.7 440.6,311.6" fill="#f7e200" stroke="#1A5A08" stroke-width="0.42" stroke-linejoin="round"/>
<polygon points="475.1,294.0 482.3,295.5 485.1,293.0 477.8,291.5" fill="#f79a00" stroke="#1A5A08" stroke-width="0.42" stroke-linejoin="round"/>
<polygon points="399.7,374.9 406.9,372.2 409.7,365.0 402.4,367.7" fill="#40e90c" stroke="#1A5A08" stroke-width="0.42" stroke-linejoin="round"/>
<polygon points="457.8,295.9 465.1,295.0 467.8,292.5 460.6,293.6" fill="#f89d00" stroke="#1A5A08" stroke-width="0.42" stroke-linejoin="round"/>
<polygon points="379.7,386.5 387.0,387.2 389.7,379.8 382.4,379.8" fill="#22c348" stroke="#1A5A08" stroke-width="0.42" stroke-linejoin="round"/>
<polygon points="359.7,400.5 367.0,402.1 369.7,394.3 362.5,392.5" fill="#139988" stroke="#1A5A08" stroke-width="0.42" stroke-linejoin="round"/>
<polygon points="369.7,394.3 377.0,393.9 379.7,386.5 372.5,386.0" fill="#11a972" stroke="#1A5A08" stroke-width="0.42" stroke-linejoin="round"/>
<polygon points="447.8,303.7 455.1,298.3 457.8,295.9 450.6,301.2" fill="#fdb400" stroke="#1A5A08" stroke-width="0.42" stroke-linejoin="round"/>
<polygon points="412.4,356.2 419.7,346.9 422.4,338.9 415.1,347.7" fill="#6bf20b" stroke="#1A5A08" stroke-width="0.42" stroke-linejoin="round"/>
<polygon points="425.1,332.8 432.4,321.3 435.1,318.0 427.9,327.9" fill="#bbf000" stroke="#1A5A08" stroke-width="0.42" stroke-linejoin="round"/>
<polygon points="357.0,416.4 364.2,411.0 367.0,402.1 359.7,400.5" fill="#1e64b4" stroke="#1A5A08" stroke-width="0.42" stroke-linejoin="round"/>
<polygon points="396.9,381.6 404.2,380.4 406.9,372.2 399.7,374.9" fill="#36dd1f" stroke="#1A5A08" stroke-width="0.42" stroke-linejoin="round"/>
<polygon points="465.1,295.0 472.3,296.5 475.1,294.0 467.8,292.5" fill="#f69500" stroke="#1A5A08" stroke-width="0.42" stroke-linejoin="round"/>
<polygon points="367.0,402.1 374.2,403.1 377.0,393.9 369.7,394.3" fill="#139a86" stroke="#1A5A08" stroke-width="0.42" stroke-linejoin="round"/>
<polygon points="387.0,387.2 394.2,387.7 396.9,381.6 389.7,379.8" fill="#25c741" stroke="#1A5A08" stroke-width="0.42" stroke-linejoin="round"/>
<polygon points="409.7,365.0 416.9,356.6 419.7,346.9 412.4,356.2" fill="#5af403" stroke="#1A5A08" stroke-width="0.42" stroke-linejoin="round"/>
<polygon points="377.0,393.9 384.2,394.8 387.0,387.2 379.7,386.5" fill="#15af69" stroke="#1A5A08" stroke-width="0.42" stroke-linejoin="round"/>
<polygon points="435.1,318.0 442.4,308.7 445.1,306.3 437.9,314.6" fill="#f8e000" stroke="#1A5A08" stroke-width="0.42" stroke-linejoin="round"/>
<polygon points="472.3,296.5 479.6,298.0 482.3,295.5 475.1,294.0" fill="#f69500" stroke="#1A5A08" stroke-width="0.42" stroke-linejoin="round"/>
<polygon points="364.2,411.0 371.5,412.1 374.2,403.1 367.0,402.1" fill="#1c6ab0" stroke="#1A5A08" stroke-width="0.42" stroke-linejoin="round"/>
<polygon points="455.1,298.3 462.3,297.5 465.1,295.0 457.8,295.9" fill="#f79800" stroke="#1A5A08" stroke-width="0.42" stroke-linejoin="round"/>
<polygon points="406.9,372.2 414.2,365.5 416.9,356.6 409.7,365.0" fill="#4ef104" stroke="#1A5A08" stroke-width="0.42" stroke-linejoin="round"/>
<polygon points="374.2,403.1 381.5,403.5 384.2,394.8 377.0,393.9" fill="#129d83" stroke="#1A5A08" stroke-width="0.42" stroke-linejoin="round"/>
<polygon points="394.2,387.7 401.5,388.2 404.2,380.4 396.9,381.6" fill="#2acd39" stroke="#1A5A08" stroke-width="0.42" stroke-linejoin="round"/>
<polygon points="384.2,394.8 391.5,396.2 394.2,387.7 387.0,387.2" fill="#17b263" stroke="#1A5A08" stroke-width="0.42" stroke-linejoin="round"/>
<polygon points="422.4,338.9 429.6,326.7 432.4,321.3 425.1,332.8" fill="#b2f002" stroke="#1A5A08" stroke-width="0.42" stroke-linejoin="round"/>
<polygon points="445.1,306.3 452.4,300.7 455.1,298.3 447.8,303.7" fill="#fcaf00" stroke="#1A5A08" stroke-width="0.42" stroke-linejoin="round"/>
<polygon points="371.5,412.1 378.8,413.2 381.5,403.5 374.2,403.1" fill="#1b6ead" stroke="#1A5A08" stroke-width="0.42" stroke-linejoin="round"/>
<polygon points="404.2,380.4 411.4,373.9 414.2,365.5 406.9,372.2" fill="#43ec09" stroke="#1A5A08" stroke-width="0.42" stroke-linejoin="round"/>
<polygon points="462.3,297.5 469.6,299.0 472.3,296.5 465.1,295.0" fill="#f59100" stroke="#1A5A08" stroke-width="0.42" stroke-linejoin="round"/>
<polygon points="381.5,403.5 388.7,404.8 391.5,396.2 384.2,394.8" fill="#119e81" stroke="#1A5A08" stroke-width="0.42" stroke-linejoin="round"/>
<polygon points="391.5,396.2 398.7,396.4 401.5,388.2 394.2,387.7" fill="#19b65d" stroke="#1A5A08" stroke-width="0.42" stroke-linejoin="round"/>
<polygon points="419.7,346.9 426.9,334.8 429.6,326.7 422.4,338.9" fill="#9ef009" stroke="#1A5A08" stroke-width="0.42" stroke-linejoin="round"/>
<polygon points="432.4,321.3 439.6,311.0 442.4,308.7 435.1,318.0" fill="#f8dd00" stroke="#1A5A08" stroke-width="0.42" stroke-linejoin="round"/>
<polygon points="401.5,388.2 408.7,383.6 411.4,373.9 404.2,380.4" fill="#38de1d" stroke="#1A5A08" stroke-width="0.42" stroke-linejoin="round"/>
<polygon points="378.8,413.2 386.0,414.2 388.7,404.8 381.5,403.5" fill="#1a71ab" stroke="#1A5A08" stroke-width="0.42" stroke-linejoin="round"/>
<polygon points="469.6,299.0 476.8,300.5 479.6,298.0 472.3,296.5" fill="#f59100" stroke="#1A5A08" stroke-width="0.42" stroke-linejoin="round"/>
<polygon points="452.4,300.7 459.6,300.0 462.3,297.5 455.1,298.3" fill="#f59300" stroke="#1A5A08" stroke-width="0.42" stroke-linejoin="round"/>
<polygon points="388.7,404.8 396.0,405.7 398.7,396.4 391.5,396.2" fill="#11a07f" stroke="#1A5A08" stroke-width="0.42" stroke-linejoin="round"/>
<polygon points="416.9,356.6 424.2,345.1 426.9,334.8 419.7,346.9" fill="#80f013" stroke="#1A5A08" stroke-width="0.42" stroke-linejoin="round"/>
<polygon points="442.4,308.7 449.6,302.7 452.4,300.7 445.1,306.3" fill="#fbaa00" stroke="#1A5A08" stroke-width="0.42" stroke-linejoin="round"/>
<polygon points="398.7,396.4 406.0,394.2 408.7,383.6 401.5,388.2" fill="#24c644" stroke="#1A5A08" stroke-width="0.42" stroke-linejoin="round"/>
<polygon points="386.0,414.2 393.2,415.3 396.0,405.7 388.7,404.8" fill="#1974a9" stroke="#1A5A08" stroke-width="0.42" stroke-linejoin="round"/>
<polygon points="414.2,365.5 421.4,354.5 424.2,345.1 416.9,356.6" fill="#6bf20b" stroke="#1A5A08" stroke-width="0.42" stroke-linejoin="round"/>
<polygon points="459.6,300.0 466.9,301.5 469.6,299.0 462.3,297.5" fill="#f48c00" stroke="#1A5A08" stroke-width="0.42" stroke-linejoin="round"/>
<polygon points="396.0,405.7 403.2,405.4 406.0,394.2 398.7,396.4" fill="#0fa479" stroke="#1A5A08" stroke-width="0.42" stroke-linejoin="round"/>
<polygon points="429.6,326.7 436.9,315.9 439.6,311.0 432.4,321.3" fill="#f7e200" stroke="#1A5A08" stroke-width="0.42" stroke-linejoin="round"/>
<polygon points="411.4,373.9 418.7,363.8 421.4,354.5 414.2,365.5" fill="#5af402" stroke="#1A5A08" stroke-width="0.42" stroke-linejoin="round"/>
<polygon points="393.2,415.3 400.5,416.4 403.2,405.4 396.0,405.7" fill="#17809f" stroke="#1A5A08" stroke-width="0.42" stroke-linejoin="round"/>
<polygon points="466.9,301.5 474.1,303.0 476.8,300.5 469.6,299.0" fill="#f48c00" stroke="#1A5A08" stroke-width="0.42" stroke-linejoin="round"/>
<polygon points="449.6,302.7 456.9,302.1 459.6,300.0 452.4,300.7" fill="#f48d00" stroke="#1A5A08" stroke-width="0.42" stroke-linejoin="round"/>
<polygon points="439.6,311.0 446.9,304.3 449.6,302.7 442.4,308.7" fill="#f9a200" stroke="#1A5A08" stroke-width="0.42" stroke-linejoin="round"/>
<polygon points="408.7,383.6 416.0,373.5 418.7,363.8 411.4,373.9" fill="#4cf005" stroke="#1A5A08" stroke-width="0.42" stroke-linejoin="round"/>
<polygon points="426.9,334.8 434.2,323.6 436.9,315.9 429.6,326.7" fill="#ebec00" stroke="#1A5A08" stroke-width="0.42" stroke-linejoin="round"/>
<polygon points="406.0,394.2 413.2,384.5 416.0,373.5 408.7,383.6" fill="#3de612" stroke="#1A5A08" stroke-width="0.42" stroke-linejoin="round"/>
<polygon points="456.9,302.1 464.1,303.6 466.9,301.5 459.6,300.0" fill="#f28600" stroke="#1A5A08" stroke-width="0.42" stroke-linejoin="round"/>
<polygon points="403.2,405.4 410.5,396.2 413.2,384.5 406.0,394.2" fill="#25c741" stroke="#1A5A08" stroke-width="0.42" stroke-linejoin="round"/>
<polygon points="424.2,345.1 431.4,334.6 434.2,323.6 426.9,334.8" fill="#c6ef00" stroke="#1A5A08" stroke-width="0.42" stroke-linejoin="round"/>
<polygon points="400.5,416.4 407.8,409.1 410.5,396.2 403.2,405.4" fill="#11a07e" stroke="#1A5A08" stroke-width="0.42" stroke-linejoin="round"/>
<polygon points="464.1,303.6 471.4,305.1 474.1,303.0 466.9,301.5" fill="#f28600" stroke="#1A5A08" stroke-width="0.42" stroke-linejoin="round"/>
<polygon points="421.4,354.5 428.7,344.2 431.4,334.6 424.2,345.1" fill="#a0f008" stroke="#1A5A08" stroke-width="0.42" stroke-linejoin="round"/>
<polygon points="446.9,304.3 454.1,303.7 456.9,302.1 449.6,302.7" fill="#f28400" stroke="#1A5A08" stroke-width="0.42" stroke-linejoin="round"/>
<polygon points="436.9,315.9 444.1,309.0 446.9,304.3 439.6,311.0" fill="#faa300" stroke="#1A5A08" stroke-width="0.42" stroke-linejoin="round"/>
<polygon points="418.7,363.8 425.9,353.4 428.7,344.2 421.4,354.5" fill="#80f013" stroke="#1A5A08" stroke-width="0.42" stroke-linejoin="round"/>
<polygon points="454.1,303.7 461.4,305.2 464.1,303.6 456.9,302.1" fill="#f07d00" stroke="#1A5A08" stroke-width="0.42" stroke-linejoin="round"/>
<polygon points="416.0,373.5 423.2,362.8 425.9,353.4 418.7,363.8" fill="#6cf20b" stroke="#1A5A08" stroke-width="0.42" stroke-linejoin="round"/>
<polygon points="434.2,323.6 441.4,316.6 444.1,309.0 436.9,315.9" fill="#fdb500" stroke="#1A5A08" stroke-width="0.42" stroke-linejoin="round"/>
<polygon points="444.1,309.0 451.4,308.5 454.1,303.7 446.9,304.3" fill="#f28300" stroke="#1A5A08" stroke-width="0.42" stroke-linejoin="round"/>
<polygon points="413.2,384.5 420.5,372.8 423.2,362.8 416.0,373.5" fill="#57f501" stroke="#1A5A08" stroke-width="0.42" stroke-linejoin="round"/>
<polygon points="461.4,305.2 468.6,306.7 471.4,305.1 464.1,303.6" fill="#f07d00" stroke="#1A5A08" stroke-width="0.42" stroke-linejoin="round"/>
<polygon points="431.4,334.6 438.7,328.1 441.4,316.6 434.2,323.6" fill="#f9db00" stroke="#1A5A08" stroke-width="0.42" stroke-linejoin="round"/>
<polygon points="410.5,396.2 417.7,382.9 420.5,372.8 413.2,384.5" fill="#47ee07" stroke="#1A5A08" stroke-width="0.42" stroke-linejoin="round"/>
<polygon points="428.7,344.2 435.9,337.9 438.7,328.1 431.4,334.6" fill="#d8ed00" stroke="#1A5A08" stroke-width="0.42" stroke-linejoin="round"/>
<polygon points="407.8,409.1 415.0,393.6 417.7,382.9 410.5,396.2" fill="#35db22" stroke="#1A5A08" stroke-width="0.42" stroke-linejoin="round"/>
<polygon points="451.4,308.5 458.6,310.0 461.4,305.2 454.1,303.7" fill="#f07d00" stroke="#1A5A08" stroke-width="0.42" stroke-linejoin="round"/>
<polygon points="441.4,316.6 448.7,316.2 451.4,308.5 444.1,309.0" fill="#f69500" stroke="#1A5A08" stroke-width="0.42" stroke-linejoin="round"/>
<polygon points="425.9,353.4 433.2,347.0 435.9,337.9 428.7,344.2" fill="#b3f002" stroke="#1A5A08" stroke-width="0.42" stroke-linejoin="round"/>
<polygon points="458.6,310.0 465.9,311.5 468.6,306.7 461.4,305.2" fill="#f07d00" stroke="#1A5A08" stroke-width="0.42" stroke-linejoin="round"/>
<polygon points="438.7,328.1 445.9,328.0 448.7,316.2 441.4,316.6" fill="#febc00" stroke="#1A5A08" stroke-width="0.42" stroke-linejoin="round"/>
<polygon points="423.2,362.8 430.5,356.2 433.2,347.0 425.9,353.4" fill="#94f00c" stroke="#1A5A08" stroke-width="0.42" stroke-linejoin="round"/>
<polygon points="448.7,316.2 455.9,317.7 458.6,310.0 451.4,308.5" fill="#f58f00" stroke="#1A5A08" stroke-width="0.42" stroke-linejoin="round"/>
<polygon points="435.9,337.9 443.2,338.0 445.9,328.0 438.7,328.1" fill="#f5eb00" stroke="#1A5A08" stroke-width="0.42" stroke-linejoin="round"/>
<polygon points="420.5,372.8 427.7,365.4 430.5,356.2 423.2,362.8" fill="#77f111" stroke="#1A5A08" stroke-width="0.42" stroke-linejoin="round"/>
<polygon points="445.9,328.0 453.2,329.5 455.9,317.7 448.7,316.2" fill="#fdb700" stroke="#1A5A08" stroke-width="0.42" stroke-linejoin="round"/>
<polygon points="433.2,347.0 440.4,347.2 443.2,338.0 435.9,337.9" fill="#cfee00" stroke="#1A5A08" stroke-width="0.42" stroke-linejoin="round"/>
<polygon points="455.9,317.7 463.2,319.2 465.9,311.5 458.6,310.0" fill="#f58f00" stroke="#1A5A08" stroke-width="0.42" stroke-linejoin="round"/>
<polygon points="443.2,338.0 450.4,339.5 453.2,329.5 445.9,328.0" fill="#f6e600" stroke="#1A5A08" stroke-width="0.42" stroke-linejoin="round"/>
<polygon points="417.7,382.9 425.0,373.9 427.7,365.4 420.5,372.8" fill="#64f308" stroke="#1A5A08" stroke-width="0.42" stroke-linejoin="round"/>
<polygon points="453.2,329.5 460.4,331.0 463.2,319.2 455.9,317.7" fill="#fdb700" stroke="#1A5A08" stroke-width="0.42" stroke-linejoin="round"/>
<polygon points="430.5,356.2 437.7,356.5 440.4,347.2 433.2,347.0" fill="#acf004" stroke="#1A5A08" stroke-width="0.42" stroke-linejoin="round"/>
<polygon points="440.4,347.2 447.7,348.8 450.4,339.5 443.2,338.0" fill="#d3ee00" stroke="#1A5A08" stroke-width="0.42" stroke-linejoin="round"/>
<polygon points="415.0,393.6 422.2,382.4 425.0,373.9 417.7,382.9" fill="#53f401" stroke="#1A5A08" stroke-width="0.42" stroke-linejoin="round"/>
<polygon points="450.4,339.5 457.7,341.0 460.4,331.0 453.2,329.5" fill="#f6e600" stroke="#1A5A08" stroke-width="0.42" stroke-linejoin="round"/>
<polygon points="427.7,365.4 435.0,365.8 437.7,356.5 430.5,356.2" fill="#8df00f" stroke="#1A5A08" stroke-width="0.42" stroke-linejoin="round"/>
<polygon points="437.7,356.5 445.0,358.0 447.7,348.8 440.4,347.2" fill="#b0f003" stroke="#1A5A08" stroke-width="0.42" stroke-linejoin="round"/>
<polygon points="447.7,348.8 454.9,350.2 457.7,341.0 450.4,339.5" fill="#d3ee00" stroke="#1A5A08" stroke-width="0.42" stroke-linejoin="round"/>
<polygon points="425.0,373.9 432.2,374.2 435.0,365.8 427.7,365.4" fill="#75f110" stroke="#1A5A08" stroke-width="0.42" stroke-linejoin="round"/>
<polygon points="435.0,365.8 442.2,367.2 445.0,358.0 437.7,356.5" fill="#90f00e" stroke="#1A5A08" stroke-width="0.42" stroke-linejoin="round"/>
<polygon points="445.0,358.0 452.2,359.5 454.9,350.2 447.7,348.8" fill="#b0f003" stroke="#1A5A08" stroke-width="0.42" stroke-linejoin="round"/>
<polygon points="422.2,382.4 429.5,382.6 432.2,374.2 425.0,373.9" fill="#65f308" stroke="#1A5A08" stroke-width="0.42" stroke-linejoin="round"/>
<polygon points="432.2,374.2 439.5,375.7 442.2,367.2 435.0,365.8" fill="#77f111" stroke="#1A5A08" stroke-width="0.42" stroke-linejoin="round"/>
<polygon points="442.2,367.2 449.5,368.8 452.2,359.5 445.0,358.0" fill="#90f00e" stroke="#1A5A08" stroke-width="0.42" stroke-linejoin="round"/>
<polygon points="439.5,375.7 446.7,377.2 449.5,368.8 442.2,367.2" fill="#77f111" stroke="#1A5A08" stroke-width="0.42" stroke-linejoin="round"/>
<polygon points="429.5,382.6 436.8,384.1 439.5,375.7 432.2,374.2" fill="#67f309" stroke="#1A5A08" stroke-width="0.42" stroke-linejoin="round"/>
<polygon points="436.8,384.1 444.0,385.6 446.7,377.2 439.5,375.7" fill="#67f309" stroke="#1A5A08" stroke-width="0.42" stroke-linejoin="round"/>
</svg>
<div class="t" style="left:505px;top:218.4px;font-size:5.3px;color:#E8E040">УОЗ (град. ПКВ)</div>
<div class="t" style="left:504.5px;top:235.5px;font-size:5.05px;color:#F0F0F0">60,00</div>
<div class="t" style="left:504.5px;top:242.45px;font-size:5.05px;color:#F0F0F0">55,79</div>
<div class="t" style="left:504.5px;top:249.4px;font-size:5.05px;color:#F0F0F0">51,58</div>
<div class="t" style="left:504.5px;top:256.35px;font-size:5.05px;color:#F0F0F0">47,37</div>
<div class="t" style="left:504.5px;top:263.3px;font-size:5.05px;color:#F0F0F0">43,16</div>
<div class="t" style="left:504.5px;top:270.25px;font-size:5.05px;color:#F0F0F0">38,95</div>
<div class="t" style="left:504.5px;top:277.2px;font-size:5.05px;color:#F0F0F0">34,74</div>
<div class="t" style="left:504.5px;top:284.15px;font-size:5.05px;color:#F0F0F0">30,53</div>
<div class="t" style="left:504.5px;top:291.1px;font-size:5.05px;color:#F0F0F0">26,32</div>
<div class="t" style="left:504.5px;top:298.05px;font-size:5.05px;color:#F0F0F0">22,11</div>
<div class="t" style="left:504.5px;top:305.0px;font-size:5.05px;color:#F0F0F0">17,89</div>
<div class="t" style="left:504.5px;top:311.95px;font-size:5.05px;color:#F0F0F0">13,68</div>
<div class="t" style="left:504.5px;top:318.9px;font-size:5.05px;color:#F0F0F0">9,47</div>
<div class="t" style="left:504.5px;top:325.85px;font-size:5.05px;color:#F0F0F0">5,26</div>
<div class="t" style="left:504.5px;top:332.8px;font-size:5.05px;color:#F0F0F0">1,05</div>
<div class="t" style="left:504.5px;top:339.75px;font-size:5.05px;color:#F0F0F0">-3,16</div>
<div class="t" style="left:504.5px;top:346.7px;font-size:5.05px;color:#F0F0F0">-7,37</div>
<div class="t" style="left:504.5px;top:353.65px;font-size:5.05px;color:#F0F0F0">-11,58</div>
<div class="t" style="left:504.5px;top:360.6px;font-size:5.05px;color:#F0F0F0">-15,79</div>
<div class="t" style="left:504.5px;top:367.55px;font-size:5.05px;color:#F0F0F0">-20,00</div>
<div class="t" style="left:352.3px;top:426.3px;font-size:5.05px;color:#F0F0F0">13</div>
<div class="t" style="left:365.5px;top:428.9px;font-size:5.05px;color:#F0F0F0">100</div>
<div class="t" style="left:380px;top:431.2px;font-size:5.05px;color:#F0F0F0">80</div>
<div class="t" style="left:394.8px;top:433.5px;font-size:5.05px;color:#F0F0F0">60</div>
<div class="t" style="left:410px;top:435.8px;font-size:5.05px;color:#F0F0F0">40</div>
<div class="t" style="left:424px;top:438.5px;font-size:5.05px;color:#F0F0F0">20</div>
<div class="t" style="left:440px;top:440.6px;font-size:5.05px;color:#F0F0F0">0</div>
<div class="t" style="left:379.2px;top:445.2px;font-size:5.3px;color:#E8E040">Нагрузка (%)</div>
<div class="t" style="left:449.6px;top:439.2px;font-size:5.05px;color:#F0F0F0">0</div>
<div class="t" style="left:457.8px;top:429.6px;font-size:5.05px;color:#F0F0F0">1000</div>
<div class="t" style="left:466.2px;top:419.9px;font-size:5.05px;color:#F0F0F0">1750</div>
<div class="t" style="left:474.3px;top:410.5px;font-size:5.05px;color:#F0F0F0">2500</div>
<div class="t" style="left:482.9px;top:400.8px;font-size:5.05px;color:#F0F0F0">4000</div>
<div class="t" style="left:491px;top:391.6px;font-size:5.05px;color:#F0F0F0">5500</div>
<div class="t" style="left:499.1px;top:381.4px;font-size:5.05px;color:#F0F0F0">6500</div>
<div class="t" style="left:492.6px;top:419.4px;font-size:5.3px;color:#E8E040">Обороты (об/мин)</div>
<div style="position:absolute;left:0px;top:468.7px;width:790px;height:2.4px;background:#C4CADC;"></div>
<div style="position:absolute;left:0px;top:471px;width:790px;height:1.8px;background:#7C7FC4;"></div>
<div style="position:absolute;left:0px;top:473.2px;width:790px;height:8.2px;background:#ECE9D8;border-top:0.8px solid #D8D8E8;"></div>
<div style="position:absolute;left:0px;top:481.4px;width:790px;height:12.6px;background:linear-gradient(#3A80F3,#245DDB 15%,#245DDB 85%,#1941A5);"></div>
<div style="position:absolute;left:0px;top:481.4px;width:35.5px;height:12.6px;background:linear-gradient(#4DAA4D,#3C963C 50%,#2F7F2F);border-radius:0 5px 5px 0;"></div>
<div class="t" style="left:10.5px;top:484px;font-size:6.3px;color:#fff;font-weight:bold;font-style:italic;letter-spacing:0.1px;">пуск</div>
<div style="position:absolute;left:4.5px;top:485.5px;width:4.2px;height:4.6px;background:conic-gradient(from 0deg,#E8A040 0 25%,#E0C050 0 50%,#90C060 0 75%,#D06040 0);border-radius:1.5px;opacity:0.85;"></div>
<div style="position:absolute;left:39px;top:482.5px;width:65.5px;height:11px;background:#1F4FC9;border-radius:2px;"></div>
<div style="position:absolute;left:44px;top:485.3px;width:4.4px;height:5.2px;background:radial-gradient(circle at 40% 40%,#B09070,#504030);border-radius:50%;"></div>
<div class="t" style="left:52px;top:483.9px;font-size:5.06px;letter-spacing:-0.285px;color:#fff;">ChipExplorer 2.1.21</div>
<div style="position:absolute;left:744px;top:481.4px;width:46px;height:12.6px;background:linear-gradient(#17A6F0,#0C8EE8 20%,#0C8EE8 80%,#0B6FCF);border-left:0.8px solid #1A6FD0;"></div>
<div class="t" style="left:720.5px;top:483.9px;font-size:5.06px;letter-spacing:-0.285px;color:#fff;">RU</div>
<div style="position:absolute;left:730px;top:486px;width:6px;height:4px;background:#C8CCD8;border-radius:0.5px;"></div>
<div style="position:absolute;left:745.5px;top:485px;width:5px;height:6px;background:radial-gradient(circle at 40% 40%,#DFF,#48C);border-radius:50%;"></div>
<div style="position:absolute;left:749px;top:485.5px;width:6px;height:5px;background:linear-gradient(135deg,transparent 50%,#C8D0D8 50%);"></div>
<div style="position:absolute;left:757px;top:485px;width:6px;height:6px;background:#B8C818;border-radius:50%;"></div>
<div style="position:absolute;left:764px;top:485px;width:6px;height:6px;background:linear-gradient(45deg,transparent 35%,#7CC84A 35%,#7CC84A 65%,transparent 65%),linear-gradient(-45deg,transparent 35%,#7CC84A 35%,#7CC84A 65%,transparent 65%);"></div>
<div class="t" style="left:774px;top:483.9px;font-size:5.28px;letter-spacing:-0.298px;color:#fff;">6:48</div>
</body></html>
